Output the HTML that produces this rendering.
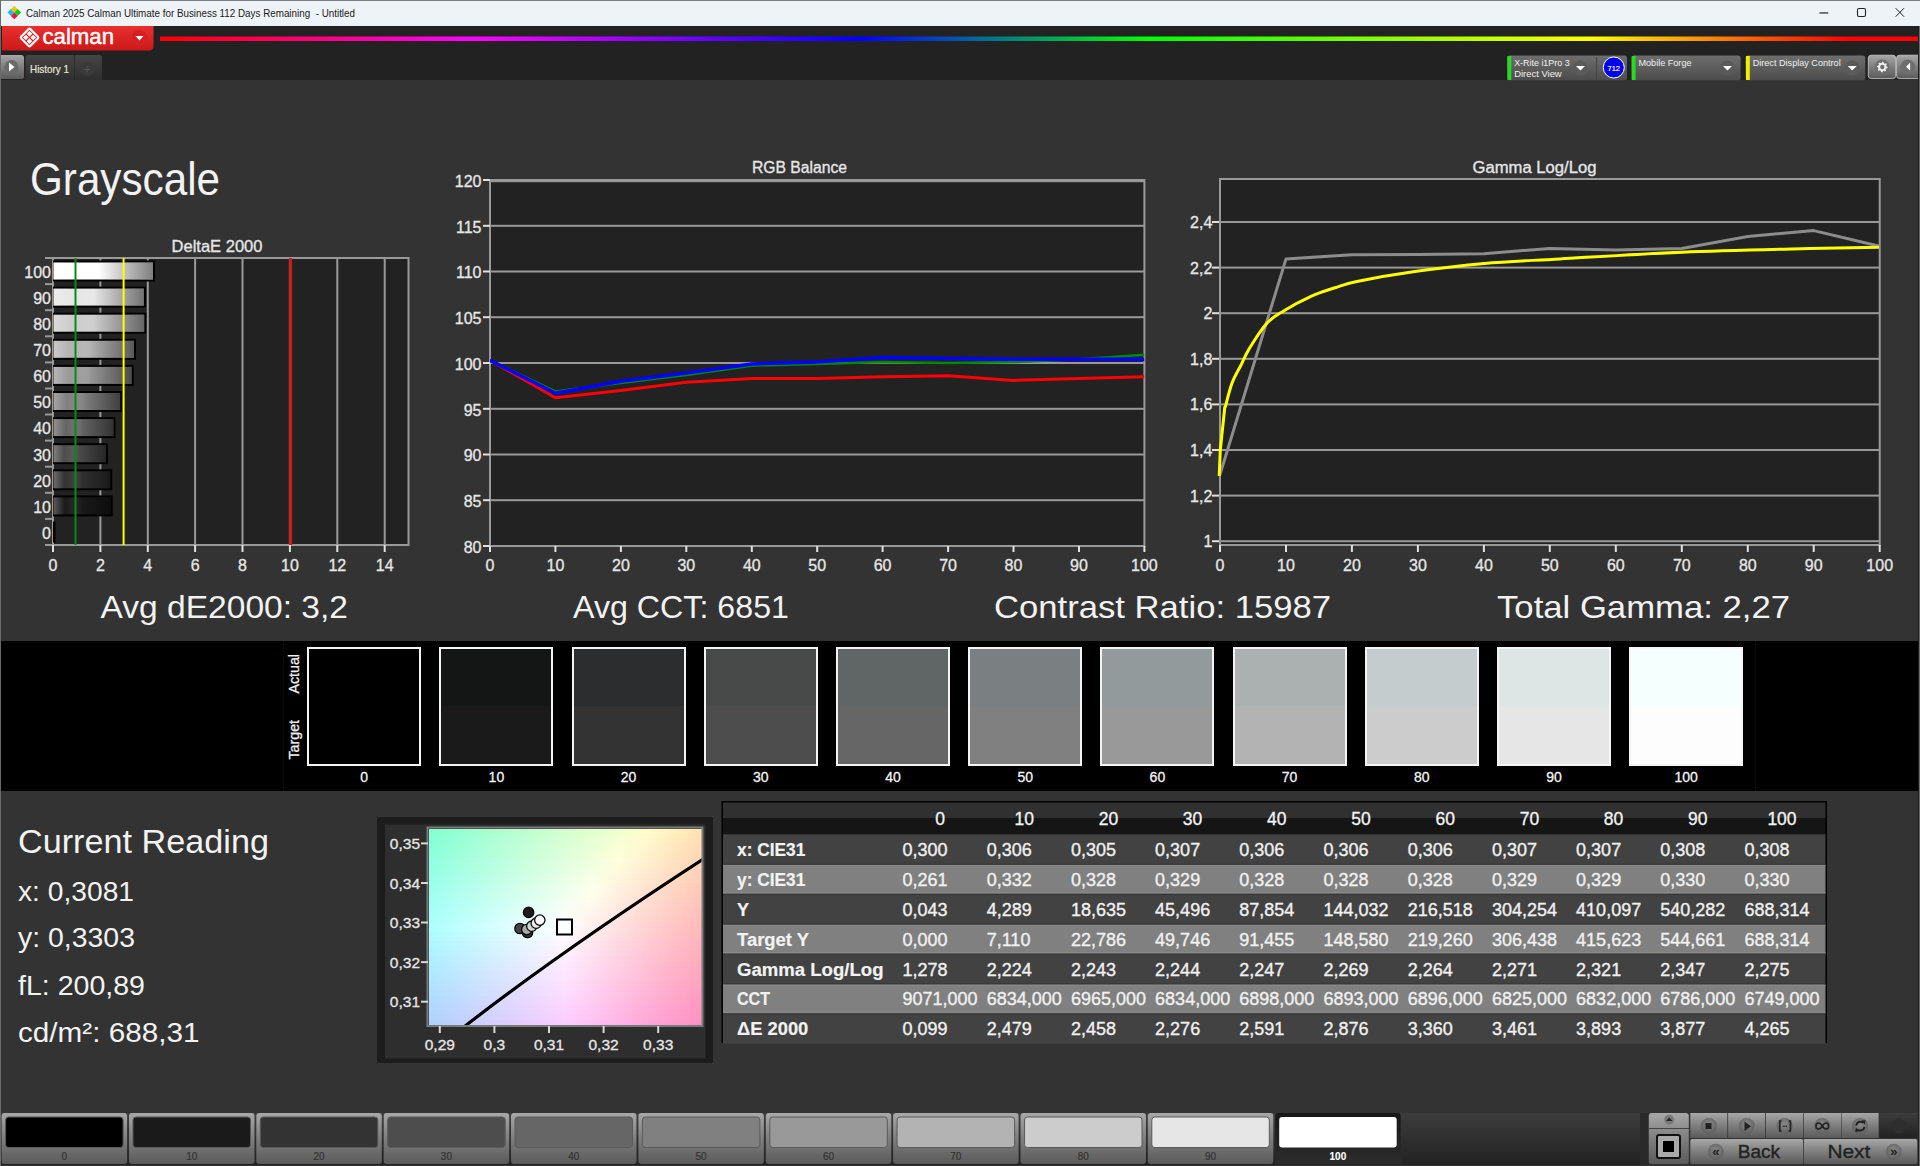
<!DOCTYPE html><html><head><meta charset="utf-8"><style>
html,body{margin:0;padding:0;background:#333;overflow:hidden;width:1920px;height:1166px}
svg{display:block}
text{font-family:"Liberation Sans", sans-serif}
</style></head><body>
<svg width="1920" height="1166" viewBox="0 0 1920 1166">
<defs>
<linearGradient id="rainbow" x1="160" y1="0" x2="1920" y2="0" gradientUnits="userSpaceOnUse">
<stop offset="0" stop-color="#ff0000"/>
<stop offset="0.1790" stop-color="#ff00ff"/>
<stop offset="0.3977" stop-color="#0000ff"/>
<stop offset="0.5625" stop-color="#00ff00"/>
<stop offset="0.8125" stop-color="#ffff00"/>
<stop offset="0.9602" stop-color="#ff0000"/>
<stop offset="1" stop-color="#ff0000"/>
</linearGradient>
<linearGradient id="redlogo" x1="0" y1="0" x2="0" y2="1">
<stop offset="0" stop-color="#e83030"/><stop offset="1" stop-color="#cc1818"/>
</linearGradient>
<linearGradient id="widget" x1="0" y1="0" x2="0" y2="1">
<stop offset="0" stop-color="#6e6e6e"/><stop offset="1" stop-color="#4c4c4c"/>
</linearGradient>
<linearGradient id="tabdark" x1="0" y1="0" x2="0" y2="1">
<stop offset="0" stop-color="#454545"/><stop offset="1" stop-color="#2e2e2e"/>
</linearGradient>
<linearGradient id="btngray" x1="0" y1="0" x2="0" y2="1">
<stop offset="0" stop-color="#a8a8a8"/><stop offset="0.35" stop-color="#8a8a8a"/><stop offset="1" stop-color="#5a5a5a"/>
</linearGradient>
<linearGradient id="btnsel" x1="0" y1="0" x2="0" y2="1">
<stop offset="0" stop-color="#181818"/><stop offset="1" stop-color="#2c2c2c"/>
</linearGradient>
<linearGradient id="barbg" x1="0" y1="0" x2="0" y2="1">
<stop offset="0" stop-color="#3c3c3c"/><stop offset="1" stop-color="#222"/>
</linearGradient>
<linearGradient id="thead" x1="0" y1="0" x2="0" y2="1">
<stop offset="0" stop-color="#2a2a2a"/><stop offset="0.45" stop-color="#2a2a2a"/><stop offset="0.46" stop-color="#1a1a1a"/><stop offset="1" stop-color="#161616"/>
</linearGradient>
<radialGradient id="circ" cx="0.5" cy="0.4" r="0.6">
<stop offset="0" stop-color="#8a8a8a"/><stop offset="1" stop-color="#5e5e5e"/>
</radialGradient>
</defs>

<rect x="0" y="0" width="1920" height="1166" fill="#333333"/>
<rect x="0" y="0" width="1920" height="26" fill="#eef3f7"/>
<rect x="0" y="0" width="1920" height="1" fill="#7a7d80"/>
<rect x="0" y="26" width="1920" height="54" fill="#222222"/>
<path d="M14.3 5.799999999999999 L17.7 9.2 L14.3 12.6 L10.9 9.2 Z" fill="#f5c400"/><path d="M10.9 9.1 L14.3 12.5 L10.9 15.9 L7.5 12.5 Z" fill="#22bbee"/><path d="M17.7 9.1 L21.099999999999998 12.5 L17.7 15.9 L14.299999999999999 12.5 Z" fill="#11cc11"/><path d="M14.3 12.5 L17.7 15.9 L14.3 19.3 L10.9 15.9 Z" fill="#ee1144"/>
<text x="26" y="17" font-size="11.5" fill="#1a1a1a" stroke="none" textLength="329" lengthAdjust="spacingAndGlyphs">Calman 2025 Calman Ultimate for Business 112 Days Remaining&#160; - Untitled</text>
<rect x="1819.5" y="12.3" width="8.7" height="1.3" fill="#333"/>
<rect x="1857.5" y="8.5" width="8" height="8" fill="none" stroke="#222" stroke-width="1.1" rx="1.5"/>
<path d="M1895.7 8.2 L1904 16.7 M1904 8.2 L1895.7 16.7" stroke="#222" stroke-width="1"/>
<path d="M2 26 H153.5 V46 Q153.5 50.5 149 50.5 H2 Z" fill="url(#redlogo)"/>
<g transform="translate(29.5,37.5) rotate(45)" fill="none" stroke="#fff" stroke-width="2.2"><rect x="-6.6" y="-6.6" width="13.2" height="13.2" rx="1.5"/></g>
<g transform="translate(29.5,37.5) rotate(45)" fill="#fff"><rect x="-4.6" y="-4.6" width="4" height="4"/><rect x="0.6" y="-4.6" width="4" height="4"/><rect x="-4.6" y="0.6" width="4" height="4"/><rect x="0.6" y="0.6" width="4" height="4"/></g>
<text transform="translate(42.5,43.75) scale(1,1.12)" x="0" y="0" font-size="19.5" fill="#fff" stroke="#fff" stroke-width="0.4" textLength="71.5" lengthAdjust="spacingAndGlyphs">calman</text>
<circle cx="139.6" cy="38" r="8" fill="#d42020"/>
<path d="M135.5 36 L143.5 36 L139.5 40.5 Z" fill="#fff"/>
<rect x="160" y="36.5" width="1760" height="4.5" fill="url(#rainbow)"/>
<path d="M1 55 H21 Q24 55 24 58 V77 Q24 79 21 79 H1 Z" fill="url(#btngray)"/>
<circle cx="11.5" cy="67" r="7" fill="#6a6a6a"/>
<path d="M9 62.5 L14.5 67 L9 71.5 Z" fill="#fff"/>
<path d="M25.5 80 V58 Q25.5 55 28.5 55 H99 Q102 55 102 58 V80 Z" fill="url(#tabdark)"/>
<rect x="74" y="55" width="1" height="25" fill="#2a2a2a"/>
<text stroke="#e8e2d4" stroke-width="0.22" x="30" y="72.5" font-size="11" fill="#e8e2d4" textLength="39" lengthAdjust="spacingAndGlyphs">History 1</text>
<circle cx="87" cy="69" r="7" fill="#3a3a3a"/>
<path d="M84 69.5 H90 M87 66.5 V72.5" stroke="#555" stroke-width="1"/>
<rect x="1507" y="55.5" width="120" height="24.7" rx="2.5" fill="url(#widget)"/><rect x="1507.5" y="56" width="3.8" height="24" fill="#22dd22"/><text x="1514.2" y="65.8" font-size="9.8" fill="#f0f0f0" textLength="55.4" lengthAdjust="spacingAndGlyphs">X-Rite i1Pro 3</text><text x="1514.2" y="77.3" font-size="9.8" fill="#f0f0f0" textLength="47.5" lengthAdjust="spacingAndGlyphs">Direct View</text><circle cx="1580.5" cy="68" r="7.5" fill="#5a5a5a"/><path d="M1576.0 66 H1585.0 L1580.5 70.5 Z" fill="#fff"/>
<rect x="1596" y="57" width="1" height="23" fill="#444"/>
<circle cx="1613.8" cy="67.5" r="10.5" fill="#0000ee" stroke="#fff" stroke-width="1"/>
<text stroke="#fff" stroke-width="0.15" x="1613.8" y="70.5" font-size="7.5" fill="#fff" text-anchor="middle">712</text>
<rect x="1631.3" y="55.5" width="109.29999999999995" height="24.7" rx="2.5" fill="url(#widget)"/><rect x="1631.8" y="56" width="3.8" height="24" fill="#22dd22"/><text x="1638.5" y="65.8" font-size="9.8" fill="#f0f0f0" textLength="53" lengthAdjust="spacingAndGlyphs">Mobile Forge</text><circle cx="1727.5" cy="68" r="7.5" fill="#5a5a5a"/><path d="M1723.0 66 H1732.0 L1727.5 70.5 Z" fill="#fff"/>
<rect x="1745.5" y="55.5" width="119.79999999999995" height="24.7" rx="2.5" fill="url(#widget)"/><rect x="1746.0" y="56" width="3.8" height="24" fill="#eeee00"/><text x="1752.7" y="65.8" font-size="9.8" fill="#f0f0f0" textLength="88" lengthAdjust="spacingAndGlyphs">Direct Display Control</text><circle cx="1852.2" cy="68" r="7.5" fill="#5a5a5a"/><path d="M1847.7 66 H1856.7 L1852.2 70.5 Z" fill="#fff"/>
<rect x="1868.3" y="55.2" width="27.4" height="23.4" rx="3" fill="url(#btngray)" stroke="#d0d0d0" stroke-width="0.8"/>
<circle cx="1882.2" cy="67" r="7.5" fill="#6e6e6e"/>
<polygon points="1882.30,61.60 1883.14,61.67 1883.75,62.53 1884.12,63.44 1884.65,63.76 1886.12,63.18 1886.67,63.83 1886.49,64.87 1886.10,65.76 1886.25,66.37 1887.70,67.00 1887.63,67.84 1886.77,68.45 1885.86,68.82 1885.54,69.35 1886.12,70.82 1885.47,71.37 1884.43,71.19 1883.54,70.80 1882.93,70.95 1882.30,72.40 1881.46,72.33 1880.85,71.47 1880.48,70.56 1879.95,70.24 1878.48,70.82 1877.93,70.17 1878.11,69.13 1878.50,68.24 1878.35,67.63 1876.90,67.00 1876.97,66.16 1877.83,65.55 1878.74,65.18 1879.06,64.65 1878.48,63.18 1879.13,62.63 1880.17,62.81 1881.06,63.20 1881.67,63.05" fill="#f0f0f0"/>
<circle cx="1882.3" cy="67" r="2.2" fill="#6e6e6e"/>
<rect x="1896.6" y="55.2" width="24" height="23.4" rx="3" fill="url(#btngray)" stroke="#d0d0d0" stroke-width="0.8"/>
<circle cx="1907.7" cy="67" r="7.5" fill="#6e6e6e"/>
<path d="M1910.1 62.8 L1906 66.8 L1910.1 70.4 Z" fill="#fff"/>
<text x="30" y="195" font-size="46" fill="#f2f2f2" textLength="190" lengthAdjust="spacingAndGlyphs">Grayscale</text>
<text stroke="#e6e6e6" stroke-width="0.32" x="171.5" y="252" font-size="16" fill="#e6e6e6" textLength="91" lengthAdjust="spacingAndGlyphs">DeltaE 2000</text>
<rect x="53" y="258" width="355.5" height="287" fill="#222222"/>
<rect x="99.4" y="258" width="2" height="287" fill="#999999"/>
<rect x="146.8" y="258" width="2" height="287" fill="#999999"/>
<rect x="194.1" y="258" width="2" height="287" fill="#999999"/>
<rect x="241.5" y="258" width="2" height="287" fill="#999999"/>
<rect x="288.9" y="258" width="2" height="287" fill="#999999"/>
<rect x="336.3" y="258" width="2" height="287" fill="#999999"/>
<rect x="383.7" y="258" width="2" height="287" fill="#999999"/>
<rect x="53" y="258" width="355.5" height="287" fill="none" stroke="#999999" stroke-width="2"/>
<linearGradient id="barhl" x1="0" y1="0" x2="1" y2="0"><stop offset="0" stop-color="#fff" stop-opacity="0.28"/><stop offset="0.2" stop-color="#fff" stop-opacity="0"/><stop offset="0.38" stop-color="#fff" stop-opacity="0.07"/><stop offset="0.5" stop-color="#fff" stop-opacity="0"/></linearGradient>
<linearGradient id="barsh" x1="0" y1="0" x2="1" y2="0"><stop offset="0" stop-color="#000" stop-opacity="0"/><stop offset="0.45" stop-color="#000" stop-opacity="0"/><stop offset="1" stop-color="#000" stop-opacity="0.5"/></linearGradient>
<rect x="53" y="495.4" width="59.7" height="21" fill="#000"/>
<rect x="53.5" y="497.4" width="57.2" height="17" fill="rgb(26,26,26)"/>
<rect x="53.5" y="497.4" width="57.2" height="17" fill="url(#barhl)"/>
<rect x="53.5" y="497.4" width="57.2" height="17" fill="url(#barsh)"/>
<rect x="53" y="469.3" width="59.2" height="21" fill="#000"/>
<rect x="53.5" y="471.3" width="56.7" height="17" fill="rgb(51,51,51)"/>
<rect x="53.5" y="471.3" width="56.7" height="17" fill="url(#barhl)"/>
<rect x="53.5" y="471.3" width="56.7" height="17" fill="url(#barsh)"/>
<rect x="53" y="443.2" width="54.9" height="21" fill="#000"/>
<rect x="53.5" y="445.2" width="52.4" height="17" fill="rgb(77,77,77)"/>
<rect x="53.5" y="445.2" width="52.4" height="17" fill="url(#barhl)"/>
<rect x="53.5" y="445.2" width="52.4" height="17" fill="url(#barsh)"/>
<rect x="53" y="417.1" width="62.4" height="21" fill="#000"/>
<rect x="53.5" y="419.1" width="59.9" height="17" fill="rgb(102,102,102)"/>
<rect x="53.5" y="419.1" width="59.9" height="17" fill="url(#barhl)"/>
<rect x="53.5" y="419.1" width="59.9" height="17" fill="url(#barsh)"/>
<rect x="53" y="391.0" width="69.1" height="21" fill="#000"/>
<rect x="53.5" y="393.0" width="66.6" height="17" fill="rgb(128,128,128)"/>
<rect x="53.5" y="393.0" width="66.6" height="17" fill="url(#barhl)"/>
<rect x="53.5" y="393.0" width="66.6" height="17" fill="url(#barsh)"/>
<rect x="53" y="364.9" width="80.6" height="21" fill="#000"/>
<rect x="53.5" y="366.9" width="78.1" height="17" fill="rgb(153,153,153)"/>
<rect x="53.5" y="366.9" width="78.1" height="17" fill="url(#barhl)"/>
<rect x="53.5" y="366.9" width="78.1" height="17" fill="url(#barsh)"/>
<rect x="53" y="338.8" width="83.0" height="21" fill="#000"/>
<rect x="53.5" y="340.8" width="80.5" height="17" fill="rgb(179,179,179)"/>
<rect x="53.5" y="340.8" width="80.5" height="17" fill="url(#barhl)"/>
<rect x="53.5" y="340.8" width="80.5" height="17" fill="url(#barsh)"/>
<rect x="53" y="312.7" width="93.2" height="21" fill="#000"/>
<rect x="53.5" y="314.7" width="90.7" height="17" fill="rgb(204,204,204)"/>
<rect x="53.5" y="314.7" width="90.7" height="17" fill="url(#barhl)"/>
<rect x="53.5" y="314.7" width="90.7" height="17" fill="url(#barsh)"/>
<rect x="53" y="286.6" width="92.8" height="21" fill="#000"/>
<rect x="53.5" y="288.6" width="90.3" height="17" fill="rgb(230,230,230)"/>
<rect x="53.5" y="288.6" width="90.3" height="17" fill="url(#barhl)"/>
<rect x="53.5" y="288.6" width="90.3" height="17" fill="url(#barsh)"/>
<rect x="53" y="260.5" width="102.0" height="21" fill="#000"/>
<rect x="53.5" y="262.5" width="99.5" height="17" fill="rgb(255,255,255)"/>
<rect x="53.5" y="262.5" width="99.5" height="17" fill="url(#barhl)"/>
<rect x="53.5" y="262.5" width="99.5" height="17" fill="url(#barsh)"/>
<rect x="53" y="521.5" width="2.5" height="21" fill="#000"/>
<rect x="74.5" y="258" width="2" height="287" fill="#0c8a0c"/>
<rect x="122.6" y="258" width="2" height="287" fill="#ffff00"/>
<rect x="289.1" y="258" width="3" height="287" fill="#d01818"/>
<text stroke="#e6e6e6" stroke-width="0.32" x="51" y="538.8" font-size="16" fill="#e6e6e6" text-anchor="end">0</text>
<text stroke="#e6e6e6" stroke-width="0.32" x="51" y="512.7" font-size="16" fill="#e6e6e6" text-anchor="end">10</text>
<text stroke="#e6e6e6" stroke-width="0.32" x="51" y="486.6" font-size="16" fill="#e6e6e6" text-anchor="end">20</text>
<text stroke="#e6e6e6" stroke-width="0.32" x="51" y="460.5" font-size="16" fill="#e6e6e6" text-anchor="end">30</text>
<text stroke="#e6e6e6" stroke-width="0.32" x="51" y="434.4" font-size="16" fill="#e6e6e6" text-anchor="end">40</text>
<text stroke="#e6e6e6" stroke-width="0.32" x="51" y="408.3" font-size="16" fill="#e6e6e6" text-anchor="end">50</text>
<text stroke="#e6e6e6" stroke-width="0.32" x="51" y="382.2" font-size="16" fill="#e6e6e6" text-anchor="end">60</text>
<text stroke="#e6e6e6" stroke-width="0.32" x="51" y="356.1" font-size="16" fill="#e6e6e6" text-anchor="end">70</text>
<text stroke="#e6e6e6" stroke-width="0.32" x="51" y="330.0" font-size="16" fill="#e6e6e6" text-anchor="end">80</text>
<text stroke="#e6e6e6" stroke-width="0.32" x="51" y="303.9" font-size="16" fill="#e6e6e6" text-anchor="end">90</text>
<text stroke="#e6e6e6" stroke-width="0.32" x="51" y="277.8" font-size="16" fill="#e6e6e6" text-anchor="end">100</text>
<rect x="45" y="544.0" width="8" height="2" fill="#999999"/>
<rect x="45" y="517.9" width="8" height="2" fill="#999999"/>
<rect x="45" y="491.8" width="8" height="2" fill="#999999"/>
<rect x="45" y="465.7" width="8" height="2" fill="#999999"/>
<rect x="45" y="439.6" width="8" height="2" fill="#999999"/>
<rect x="45" y="413.5" width="8" height="2" fill="#999999"/>
<rect x="45" y="387.5" width="8" height="2" fill="#999999"/>
<rect x="45" y="361.4" width="8" height="2" fill="#999999"/>
<rect x="45" y="335.3" width="8" height="2" fill="#999999"/>
<rect x="45" y="309.2" width="8" height="2" fill="#999999"/>
<rect x="45" y="283.1" width="8" height="2" fill="#999999"/>
<rect x="45" y="257.0" width="8" height="2" fill="#999999"/>
<rect x="52.0" y="545" width="2" height="7" fill="#e0e0e0"/>
<text stroke="#e6e6e6" stroke-width="0.32" x="53.0" y="570.5" font-size="16" fill="#e6e6e6" text-anchor="middle">0</text>
<rect x="99.4" y="545" width="2" height="7" fill="#e0e0e0"/>
<text stroke="#e6e6e6" stroke-width="0.32" x="100.4" y="570.5" font-size="16" fill="#e6e6e6" text-anchor="middle">2</text>
<rect x="146.8" y="545" width="2" height="7" fill="#e0e0e0"/>
<text stroke="#e6e6e6" stroke-width="0.32" x="147.8" y="570.5" font-size="16" fill="#e6e6e6" text-anchor="middle">4</text>
<rect x="194.1" y="545" width="2" height="7" fill="#e0e0e0"/>
<text stroke="#e6e6e6" stroke-width="0.32" x="195.1" y="570.5" font-size="16" fill="#e6e6e6" text-anchor="middle">6</text>
<rect x="241.5" y="545" width="2" height="7" fill="#e0e0e0"/>
<text stroke="#e6e6e6" stroke-width="0.32" x="242.5" y="570.5" font-size="16" fill="#e6e6e6" text-anchor="middle">8</text>
<rect x="288.9" y="545" width="2" height="7" fill="#e0e0e0"/>
<text stroke="#e6e6e6" stroke-width="0.32" x="289.9" y="570.5" font-size="16" fill="#e6e6e6" text-anchor="middle">10</text>
<rect x="336.3" y="545" width="2" height="7" fill="#e0e0e0"/>
<text stroke="#e6e6e6" stroke-width="0.32" x="337.3" y="570.5" font-size="16" fill="#e6e6e6" text-anchor="middle">12</text>
<rect x="383.7" y="545" width="2" height="7" fill="#e0e0e0"/>
<text stroke="#e6e6e6" stroke-width="0.32" x="384.7" y="570.5" font-size="16" fill="#e6e6e6" text-anchor="middle">14</text>
<text stroke="#e6e6e6" stroke-width="0.32" x="752" y="173" font-size="16" fill="#e6e6e6" textLength="95" lengthAdjust="spacingAndGlyphs">RGB Balance</text>
<rect x="490" y="180" width="654.4000000000001" height="366" fill="#222222"/>
<rect x="490" y="499.2" width="654.4000000000001" height="2" fill="#999999"/>
<rect x="490" y="453.5" width="654.4000000000001" height="2" fill="#999999"/>
<rect x="490" y="407.8" width="654.4000000000001" height="2" fill="#999999"/>
<rect x="490" y="362.0" width="654.4000000000001" height="2" fill="#999999"/>
<rect x="490" y="316.2" width="654.4000000000001" height="2" fill="#999999"/>
<rect x="490" y="270.5" width="654.4000000000001" height="2" fill="#999999"/>
<rect x="490" y="224.8" width="654.4000000000001" height="2" fill="#999999"/>
<rect x="490" y="180" width="654.4000000000001" height="2.2" fill="#999999"/>
<rect x="490" y="180" width="654.4000000000001" height="366" fill="none" stroke="#999999" stroke-width="2"/>
<rect x="483" y="545.0" width="7" height="2" fill="#e0e0e0"/>
<text stroke="#e6e6e6" stroke-width="0.32" x="481.5" y="552.8" font-size="16" fill="#e6e6e6" text-anchor="end">80</text>
<rect x="483" y="499.2" width="7" height="2" fill="#e0e0e0"/>
<text stroke="#e6e6e6" stroke-width="0.32" x="481.5" y="507.1" font-size="16" fill="#e6e6e6" text-anchor="end">85</text>
<rect x="483" y="453.5" width="7" height="2" fill="#e0e0e0"/>
<text stroke="#e6e6e6" stroke-width="0.32" x="481.5" y="461.3" font-size="16" fill="#e6e6e6" text-anchor="end">90</text>
<rect x="483" y="407.8" width="7" height="2" fill="#e0e0e0"/>
<text stroke="#e6e6e6" stroke-width="0.32" x="481.5" y="415.6" font-size="16" fill="#e6e6e6" text-anchor="end">95</text>
<rect x="483" y="362.0" width="7" height="2" fill="#e0e0e0"/>
<text stroke="#e6e6e6" stroke-width="0.32" x="481.5" y="369.8" font-size="16" fill="#e6e6e6" text-anchor="end">100</text>
<rect x="483" y="316.2" width="7" height="2" fill="#e0e0e0"/>
<text stroke="#e6e6e6" stroke-width="0.32" x="481.5" y="324.1" font-size="16" fill="#e6e6e6" text-anchor="end">105</text>
<rect x="483" y="270.5" width="7" height="2" fill="#e0e0e0"/>
<text stroke="#e6e6e6" stroke-width="0.32" x="481.5" y="278.3" font-size="16" fill="#e6e6e6" text-anchor="end">110</text>
<rect x="483" y="224.8" width="7" height="2" fill="#e0e0e0"/>
<text stroke="#e6e6e6" stroke-width="0.32" x="481.5" y="232.6" font-size="16" fill="#e6e6e6" text-anchor="end">115</text>
<rect x="483" y="179.0" width="7" height="2" fill="#e0e0e0"/>
<text stroke="#e6e6e6" stroke-width="0.32" x="481.5" y="186.8" font-size="16" fill="#e6e6e6" text-anchor="end">120</text>
<rect x="489.0" y="546" width="2" height="6" fill="#e0e0e0"/>
<text stroke="#e6e6e6" stroke-width="0.32" x="490.0" y="570.5" font-size="16" fill="#e6e6e6" text-anchor="middle">0</text>
<rect x="554.4" y="546" width="2" height="6" fill="#e0e0e0"/>
<text stroke="#e6e6e6" stroke-width="0.32" x="555.4" y="570.5" font-size="16" fill="#e6e6e6" text-anchor="middle">10</text>
<rect x="619.9" y="546" width="2" height="6" fill="#e0e0e0"/>
<text stroke="#e6e6e6" stroke-width="0.32" x="620.9" y="570.5" font-size="16" fill="#e6e6e6" text-anchor="middle">20</text>
<rect x="685.3" y="546" width="2" height="6" fill="#e0e0e0"/>
<text stroke="#e6e6e6" stroke-width="0.32" x="686.3" y="570.5" font-size="16" fill="#e6e6e6" text-anchor="middle">30</text>
<rect x="750.8" y="546" width="2" height="6" fill="#e0e0e0"/>
<text stroke="#e6e6e6" stroke-width="0.32" x="751.8" y="570.5" font-size="16" fill="#e6e6e6" text-anchor="middle">40</text>
<rect x="816.2" y="546" width="2" height="6" fill="#e0e0e0"/>
<text stroke="#e6e6e6" stroke-width="0.32" x="817.2" y="570.5" font-size="16" fill="#e6e6e6" text-anchor="middle">50</text>
<rect x="881.6" y="546" width="2" height="6" fill="#e0e0e0"/>
<text stroke="#e6e6e6" stroke-width="0.32" x="882.6" y="570.5" font-size="16" fill="#e6e6e6" text-anchor="middle">60</text>
<rect x="947.1" y="546" width="2" height="6" fill="#e0e0e0"/>
<text stroke="#e6e6e6" stroke-width="0.32" x="948.1" y="570.5" font-size="16" fill="#e6e6e6" text-anchor="middle">70</text>
<rect x="1012.5" y="546" width="2" height="6" fill="#e0e0e0"/>
<text stroke="#e6e6e6" stroke-width="0.32" x="1013.5" y="570.5" font-size="16" fill="#e6e6e6" text-anchor="middle">80</text>
<rect x="1078.0" y="546" width="2" height="6" fill="#e0e0e0"/>
<text stroke="#e6e6e6" stroke-width="0.32" x="1079.0" y="570.5" font-size="16" fill="#e6e6e6" text-anchor="middle">90</text>
<rect x="1143.4" y="546" width="2" height="6" fill="#e0e0e0"/>
<text stroke="#e6e6e6" stroke-width="0.32" x="1144.4" y="570.5" font-size="16" fill="#e6e6e6" text-anchor="middle">100</text>
<svg x="490" y="180" width="654.4000000000001" height="366" viewBox="490 180 654.4000000000001 366" overflow="hidden">
<polyline points="490.0,360.3 555.4,397.8 620.9,390.4 686.3,382.2 751.8,378.6 817.2,378.6 882.6,376.7 948.1,375.8 1013.5,380.4 1079.0,378.6 1144.4,376.7" fill="none" stroke="#ff0000" stroke-width="3" stroke-linejoin="round"/>
<polyline points="490.0,360.3 555.4,391.4 620.9,383.1 686.3,374.9 751.8,365.7 817.2,363.9 882.6,362.1 948.1,363.0 1013.5,362.1 1079.0,359.3 1144.4,354.8" fill="none" stroke="#008800" stroke-width="2.5" stroke-linejoin="round"/>
<polyline points="490.0,360.3 555.4,393.2 620.9,381.3 686.3,373.1 751.8,363.9 817.2,362.1 882.6,357.5 948.1,358.4 1013.5,359.3 1079.0,359.3 1144.4,359.3" fill="none" stroke="#0000ff" stroke-width="3.5" stroke-linejoin="round"/>
</svg>
<text stroke="#e6e6e6" stroke-width="0.32" x="1472.5" y="173" font-size="16" fill="#e6e6e6" textLength="124" lengthAdjust="spacingAndGlyphs">Gamma Log/Log</text>
<rect x="1220" y="179" width="659.7" height="366" fill="#222222"/>
<rect x="1220" y="540.2" width="659.7" height="2" fill="#999999"/>
<rect x="1212" y="540.2" width="8" height="2" fill="#e0e0e0"/>
<text stroke="#e6e6e6" stroke-width="0.32" x="1212.3" y="547.1" font-size="16" fill="#e6e6e6" text-anchor="end">1</text>
<rect x="1220" y="494.6" width="659.7" height="2" fill="#999999"/>
<rect x="1212" y="494.6" width="8" height="2" fill="#e0e0e0"/>
<text stroke="#e6e6e6" stroke-width="0.32" x="1212.3" y="501.5" font-size="16" fill="#e6e6e6" text-anchor="end">1,2</text>
<rect x="1220" y="449.0" width="659.7" height="2" fill="#999999"/>
<rect x="1212" y="449.0" width="8" height="2" fill="#e0e0e0"/>
<text stroke="#e6e6e6" stroke-width="0.32" x="1212.3" y="455.9" font-size="16" fill="#e6e6e6" text-anchor="end">1,4</text>
<rect x="1220" y="403.4" width="659.7" height="2" fill="#999999"/>
<rect x="1212" y="403.4" width="8" height="2" fill="#e0e0e0"/>
<text stroke="#e6e6e6" stroke-width="0.32" x="1212.3" y="410.3" font-size="16" fill="#e6e6e6" text-anchor="end">1,6</text>
<rect x="1220" y="357.8" width="659.7" height="2" fill="#999999"/>
<rect x="1212" y="357.8" width="8" height="2" fill="#e0e0e0"/>
<text stroke="#e6e6e6" stroke-width="0.32" x="1212.3" y="364.7" font-size="16" fill="#e6e6e6" text-anchor="end">1,8</text>
<rect x="1220" y="312.2" width="659.7" height="2" fill="#999999"/>
<rect x="1212" y="312.2" width="8" height="2" fill="#e0e0e0"/>
<text stroke="#e6e6e6" stroke-width="0.32" x="1212.3" y="319.1" font-size="16" fill="#e6e6e6" text-anchor="end">2</text>
<rect x="1220" y="266.6" width="659.7" height="2" fill="#999999"/>
<rect x="1212" y="266.6" width="8" height="2" fill="#e0e0e0"/>
<text stroke="#e6e6e6" stroke-width="0.32" x="1212.3" y="273.5" font-size="16" fill="#e6e6e6" text-anchor="end">2,2</text>
<rect x="1220" y="221.0" width="659.7" height="2" fill="#999999"/>
<rect x="1212" y="221.0" width="8" height="2" fill="#e0e0e0"/>
<text stroke="#e6e6e6" stroke-width="0.32" x="1212.3" y="227.9" font-size="16" fill="#e6e6e6" text-anchor="end">2,4</text>
<rect x="1220" y="179" width="659.7" height="366" fill="none" stroke="#999999" stroke-width="2"/>
<rect x="1219.0" y="545" width="2" height="7" fill="#e0e0e0"/>
<text stroke="#e6e6e6" stroke-width="0.32" x="1220.0" y="570.5" font-size="16" fill="#e6e6e6" text-anchor="middle">0</text>
<rect x="1285.0" y="545" width="2" height="7" fill="#e0e0e0"/>
<text stroke="#e6e6e6" stroke-width="0.32" x="1286.0" y="570.5" font-size="16" fill="#e6e6e6" text-anchor="middle">10</text>
<rect x="1350.9" y="545" width="2" height="7" fill="#e0e0e0"/>
<text stroke="#e6e6e6" stroke-width="0.32" x="1351.9" y="570.5" font-size="16" fill="#e6e6e6" text-anchor="middle">20</text>
<rect x="1416.9" y="545" width="2" height="7" fill="#e0e0e0"/>
<text stroke="#e6e6e6" stroke-width="0.32" x="1417.9" y="570.5" font-size="16" fill="#e6e6e6" text-anchor="middle">30</text>
<rect x="1482.9" y="545" width="2" height="7" fill="#e0e0e0"/>
<text stroke="#e6e6e6" stroke-width="0.32" x="1483.9" y="570.5" font-size="16" fill="#e6e6e6" text-anchor="middle">40</text>
<rect x="1548.8" y="545" width="2" height="7" fill="#e0e0e0"/>
<text stroke="#e6e6e6" stroke-width="0.32" x="1549.8" y="570.5" font-size="16" fill="#e6e6e6" text-anchor="middle">50</text>
<rect x="1614.8" y="545" width="2" height="7" fill="#e0e0e0"/>
<text stroke="#e6e6e6" stroke-width="0.32" x="1615.8" y="570.5" font-size="16" fill="#e6e6e6" text-anchor="middle">60</text>
<rect x="1680.8" y="545" width="2" height="7" fill="#e0e0e0"/>
<text stroke="#e6e6e6" stroke-width="0.32" x="1681.8" y="570.5" font-size="16" fill="#e6e6e6" text-anchor="middle">70</text>
<rect x="1746.8" y="545" width="2" height="7" fill="#e0e0e0"/>
<text stroke="#e6e6e6" stroke-width="0.32" x="1747.8" y="570.5" font-size="16" fill="#e6e6e6" text-anchor="middle">80</text>
<rect x="1812.7" y="545" width="2" height="7" fill="#e0e0e0"/>
<text stroke="#e6e6e6" stroke-width="0.32" x="1813.7" y="570.5" font-size="16" fill="#e6e6e6" text-anchor="middle">90</text>
<rect x="1878.7" y="545" width="2" height="7" fill="#e0e0e0"/>
<text stroke="#e6e6e6" stroke-width="0.32" x="1879.7" y="570.5" font-size="16" fill="#e6e6e6" text-anchor="middle">100</text>
<polyline points="1220.0,474.5 1286.0,258.9 1351.9,254.7 1417.9,254.6 1483.9,253.8 1549.8,248.4 1615.8,250.0 1681.8,248.4 1747.8,236.4 1813.7,230.6 1879.7,246.3" fill="none" stroke="#8c8c8c" stroke-width="3" stroke-linejoin="round"/>
<path d="M1219.2 476 L1220.3 450 L1224.8 407 L1225.3 406.9 C1226.4 402.9 1229.5 389.8 1232.1 382.9 C1234.7 376.0 1237.8 371.4 1240.7 365.7 C1243.6 360.0 1245.0 355.6 1249.3 348.6 C1253.6 341.6 1260.7 330.0 1266.4 323.7 C1272.1 317.4 1276.2 315.5 1283.6 310.9 C1291.0 306.3 1302.4 300.2 1311.0 296.3 C1319.6 292.4 1327.3 290.2 1335.0 287.7 C1342.7 285.2 1343.6 284.2 1356.9 281.5 C1370.2 278.8 1393.6 274.6 1414.8 271.6 C1436.0 268.6 1460.1 265.6 1484.3 263.5 C1508.5 261.4 1527.0 260.8 1560.0 258.9 C1593.0 257.0 1640.5 253.9 1682.1 252.2 C1723.7 250.5 1776.7 249.4 1809.5 248.6 C1842.3 247.8 1867.4 247.5 1879.0 247.3" fill="none" stroke="#ffff00" stroke-width="3" stroke-linejoin="round"/>
<text x="100.5" y="617.5" font-size="32" fill="#f2f2f2" textLength="247.5" lengthAdjust="spacingAndGlyphs">Avg dE2000: 3,2</text>
<text x="573" y="617.5" font-size="32" fill="#f2f2f2" textLength="216" lengthAdjust="spacingAndGlyphs">Avg CCT: 6851</text>
<text x="994" y="617.5" font-size="32" fill="#f2f2f2" textLength="337" lengthAdjust="spacingAndGlyphs">Contrast Ratio: 15987</text>
<text x="1497" y="617.5" font-size="32" fill="#f2f2f2" textLength="293" lengthAdjust="spacingAndGlyphs">Total Gamma: 2,27</text>
<rect x="1" y="641" width="1917" height="150" fill="#000"/>
<rect x="283" y="641" width="1" height="150" fill="#0a0a0a"/>
<rect x="1755" y="641" width="1" height="150" fill="#0a0a0a"/>
<rect x="307" y="647" width="114" height="119" fill="#f4f4f4"/>
<rect x="309" y="649" width="110" height="57" fill="#000000"/>
<rect x="309" y="706" width="110" height="58" fill="#000000"/>
<text stroke="#f4f4f4" stroke-width="0.28" x="364.2" y="781.5" font-size="14" fill="#f4f4f4" text-anchor="middle">0</text>
<rect x="439" y="647" width="114" height="119" fill="#f4f4f4"/>
<rect x="441" y="649" width="110" height="57" fill="#141615"/>
<rect x="441" y="706" width="110" height="58" fill="#1a1a1a"/>
<text stroke="#f4f4f4" stroke-width="0.28" x="496.4" y="781.5" font-size="14" fill="#f4f4f4" text-anchor="middle">10</text>
<rect x="572" y="647" width="114" height="119" fill="#f4f4f4"/>
<rect x="574" y="649" width="110" height="57" fill="#2b2d2e"/>
<rect x="574" y="706" width="110" height="58" fill="#333333"/>
<text stroke="#f4f4f4" stroke-width="0.28" x="628.6" y="781.5" font-size="14" fill="#f4f4f4" text-anchor="middle">20</text>
<rect x="704" y="647" width="114" height="119" fill="#f4f4f4"/>
<rect x="706" y="649" width="110" height="57" fill="#484a4a"/>
<rect x="706" y="706" width="110" height="58" fill="#4d4d4d"/>
<text stroke="#f4f4f4" stroke-width="0.28" x="760.8" y="781.5" font-size="14" fill="#f4f4f4" text-anchor="middle">30</text>
<rect x="836" y="647" width="114" height="119" fill="#f4f4f4"/>
<rect x="838" y="649" width="110" height="57" fill="#606665"/>
<rect x="838" y="706" width="110" height="58" fill="#666666"/>
<text stroke="#f4f4f4" stroke-width="0.28" x="893.0" y="781.5" font-size="14" fill="#f4f4f4" text-anchor="middle">40</text>
<rect x="968" y="647" width="114" height="119" fill="#f4f4f4"/>
<rect x="970" y="649" width="110" height="57" fill="#7a8082"/>
<rect x="970" y="706" width="110" height="58" fill="#808080"/>
<text stroke="#f4f4f4" stroke-width="0.28" x="1025.2" y="781.5" font-size="14" fill="#f4f4f4" text-anchor="middle">50</text>
<rect x="1100" y="647" width="114" height="119" fill="#f4f4f4"/>
<rect x="1102" y="649" width="110" height="57" fill="#939a9c"/>
<rect x="1102" y="706" width="110" height="58" fill="#999999"/>
<text stroke="#f4f4f4" stroke-width="0.28" x="1157.4" y="781.5" font-size="14" fill="#f4f4f4" text-anchor="middle">60</text>
<rect x="1233" y="647" width="114" height="119" fill="#f4f4f4"/>
<rect x="1235" y="649" width="110" height="57" fill="#abb1b0"/>
<rect x="1235" y="706" width="110" height="58" fill="#b3b3b3"/>
<text stroke="#f4f4f4" stroke-width="0.28" x="1289.6" y="781.5" font-size="14" fill="#f4f4f4" text-anchor="middle">70</text>
<rect x="1365" y="647" width="114" height="119" fill="#f4f4f4"/>
<rect x="1367" y="649" width="110" height="57" fill="#c4cccd"/>
<rect x="1367" y="706" width="110" height="58" fill="#cccccc"/>
<text stroke="#f4f4f4" stroke-width="0.28" x="1421.8" y="781.5" font-size="14" fill="#f4f4f4" text-anchor="middle">80</text>
<rect x="1497" y="647" width="114" height="119" fill="#f4f4f4"/>
<rect x="1499" y="649" width="110" height="57" fill="#dde6e5"/>
<rect x="1499" y="706" width="110" height="58" fill="#e6e6e6"/>
<text stroke="#f4f4f4" stroke-width="0.28" x="1554.0" y="781.5" font-size="14" fill="#f4f4f4" text-anchor="middle">90</text>
<rect x="1629" y="647" width="114" height="119" fill="#f4f4f4"/>
<rect x="1631" y="649" width="110" height="57" fill="#f5fffe"/>
<rect x="1631" y="706" width="110" height="58" fill="#fdfdfd"/>
<text stroke="#f4f4f4" stroke-width="0.28" x="1686.2" y="781.5" font-size="14" fill="#f4f4f4" text-anchor="middle">100</text>
<text stroke="#f0f0f0" stroke-width="0.28" transform="translate(299,693.5) rotate(-90)" font-size="14" fill="#f0f0f0" textLength="39.5" lengthAdjust="spacingAndGlyphs">Actual</text>
<text stroke="#f0f0f0" stroke-width="0.28" transform="translate(299,759.5) rotate(-90)" font-size="14" fill="#f0f0f0" textLength="39.5" lengthAdjust="spacingAndGlyphs">Target</text>
<text x="18" y="852.5" font-size="33" fill="#f2f2f2" textLength="251" lengthAdjust="spacingAndGlyphs">Current Reading</text>
<text x="18" y="900.5" font-size="27" fill="#f2f2f2" textLength="116" lengthAdjust="spacingAndGlyphs">x: 0,3081</text>
<text x="18" y="947" font-size="27" fill="#f2f2f2" textLength="117" lengthAdjust="spacingAndGlyphs">y: 0,3303</text>
<text x="18" y="995" font-size="27" fill="#f2f2f2" textLength="127" lengthAdjust="spacingAndGlyphs">fL: 200,89</text>
<text x="18" y="1041.5" font-size="27" fill="#f2f2f2" textLength="181.5" lengthAdjust="spacingAndGlyphs">cd/m²: 688,31</text>
<rect x="377" y="817" width="336" height="246" fill="#1c1c1c"/>
<rect x="385" y="824.5" width="320.5" height="234" fill="#2e2e2e"/>
<linearGradient id="cie0" x1="0" y1="0" x2="1" y2="0"><stop offset="0.0" stop-color="#82ffd2"/><stop offset="0.1" stop-color="#93ffd2"/><stop offset="0.2" stop-color="#a4ffd1"/><stop offset="0.3" stop-color="#b4ffd0"/><stop offset="0.4" stop-color="#c4ffd0"/><stop offset="0.5" stop-color="#d4ffcf"/><stop offset="0.6" stop-color="#e3ffcf"/><stop offset="0.7" stop-color="#f2ffce"/><stop offset="0.8" stop-color="#fffdcb"/><stop offset="0.9" stop-color="#ffefbe"/><stop offset="1.0" stop-color="#ffe1b1"/></linearGradient>
<rect x="428.5" y="828.50" width="273.0" height="5.91" fill="url(#cie0)" shape-rendering="crispEdges"/>
<linearGradient id="cie1" x1="0" y1="0" x2="1" y2="0"><stop offset="0.0" stop-color="#84ffd4"/><stop offset="0.1" stop-color="#95ffd4"/><stop offset="0.2" stop-color="#a6ffd3"/><stop offset="0.3" stop-color="#b6ffd3"/><stop offset="0.4" stop-color="#c6ffd2"/><stop offset="0.5" stop-color="#d6ffd2"/><stop offset="0.6" stop-color="#e5ffd1"/><stop offset="0.7" stop-color="#f4ffd0"/><stop offset="0.8" stop-color="#fffbcc"/><stop offset="0.9" stop-color="#ffedbe"/><stop offset="1.0" stop-color="#ffdfb1"/></linearGradient>
<rect x="428.5" y="833.41" width="273.0" height="5.91" fill="url(#cie1)" shape-rendering="crispEdges"/>
<linearGradient id="cie2" x1="0" y1="0" x2="1" y2="0"><stop offset="0.0" stop-color="#86ffd7"/><stop offset="0.1" stop-color="#97ffd6"/><stop offset="0.2" stop-color="#a8ffd6"/><stop offset="0.3" stop-color="#b8ffd5"/><stop offset="0.4" stop-color="#c8ffd4"/><stop offset="0.5" stop-color="#d8ffd4"/><stop offset="0.6" stop-color="#e7ffd3"/><stop offset="0.7" stop-color="#f6ffd3"/><stop offset="0.8" stop-color="#fff9cc"/><stop offset="0.9" stop-color="#ffebbf"/><stop offset="1.0" stop-color="#ffddb2"/></linearGradient>
<rect x="428.5" y="838.33" width="273.0" height="5.91" fill="url(#cie2)" shape-rendering="crispEdges"/>
<linearGradient id="cie3" x1="0" y1="0" x2="1" y2="0"><stop offset="0.0" stop-color="#88ffd9"/><stop offset="0.1" stop-color="#99ffd8"/><stop offset="0.2" stop-color="#aaffd8"/><stop offset="0.3" stop-color="#baffd7"/><stop offset="0.4" stop-color="#caffd7"/><stop offset="0.5" stop-color="#daffd6"/><stop offset="0.6" stop-color="#e9ffd6"/><stop offset="0.7" stop-color="#f9ffd5"/><stop offset="0.8" stop-color="#fff7cd"/><stop offset="0.9" stop-color="#ffe8bf"/><stop offset="1.0" stop-color="#ffdbb2"/></linearGradient>
<rect x="428.5" y="843.24" width="273.0" height="5.91" fill="url(#cie3)" shape-rendering="crispEdges"/>
<linearGradient id="cie4" x1="0" y1="0" x2="1" y2="0"><stop offset="0.0" stop-color="#8affdb"/><stop offset="0.1" stop-color="#9bffdb"/><stop offset="0.2" stop-color="#acffda"/><stop offset="0.3" stop-color="#bcffda"/><stop offset="0.4" stop-color="#ccffd9"/><stop offset="0.5" stop-color="#dcffd9"/><stop offset="0.6" stop-color="#ecffd8"/><stop offset="0.7" stop-color="#fbffd7"/><stop offset="0.8" stop-color="#fff4cd"/><stop offset="0.9" stop-color="#ffe6c0"/><stop offset="1.0" stop-color="#ffd9b3"/></linearGradient>
<rect x="428.5" y="848.15" width="273.0" height="5.91" fill="url(#cie4)" shape-rendering="crispEdges"/>
<linearGradient id="cie5" x1="0" y1="0" x2="1" y2="0"><stop offset="0.0" stop-color="#8cffdd"/><stop offset="0.1" stop-color="#9effdd"/><stop offset="0.2" stop-color="#aeffdc"/><stop offset="0.3" stop-color="#bfffdc"/><stop offset="0.4" stop-color="#cfffdb"/><stop offset="0.5" stop-color="#deffdb"/><stop offset="0.6" stop-color="#eeffda"/><stop offset="0.7" stop-color="#fdffda"/><stop offset="0.8" stop-color="#fff2cd"/><stop offset="0.9" stop-color="#ffe4c0"/><stop offset="1.0" stop-color="#ffd7b3"/></linearGradient>
<rect x="428.5" y="853.06" width="273.0" height="5.91" fill="url(#cie5)" shape-rendering="crispEdges"/>
<linearGradient id="cie6" x1="0" y1="0" x2="1" y2="0"><stop offset="0.0" stop-color="#8effe0"/><stop offset="0.1" stop-color="#a0ffdf"/><stop offset="0.2" stop-color="#b0ffdf"/><stop offset="0.3" stop-color="#c1ffde"/><stop offset="0.4" stop-color="#d1ffde"/><stop offset="0.5" stop-color="#e1ffdd"/><stop offset="0.6" stop-color="#f0ffdd"/><stop offset="0.7" stop-color="#ffffdc"/><stop offset="0.8" stop-color="#fff0ce"/><stop offset="0.9" stop-color="#ffe2c0"/><stop offset="1.0" stop-color="#ffd5b4"/></linearGradient>
<rect x="428.5" y="857.98" width="273.0" height="5.91" fill="url(#cie6)" shape-rendering="crispEdges"/>
<linearGradient id="cie7" x1="0" y1="0" x2="1" y2="0"><stop offset="0.0" stop-color="#91ffe2"/><stop offset="0.1" stop-color="#a2ffe1"/><stop offset="0.2" stop-color="#b3ffe1"/><stop offset="0.3" stop-color="#c3ffe1"/><stop offset="0.4" stop-color="#d3ffe0"/><stop offset="0.5" stop-color="#e3ffe0"/><stop offset="0.6" stop-color="#f2ffdf"/><stop offset="0.7" stop-color="#fffcdc"/><stop offset="0.8" stop-color="#ffeece"/><stop offset="0.9" stop-color="#ffe0c1"/><stop offset="1.0" stop-color="#ffd3b4"/></linearGradient>
<rect x="428.5" y="862.89" width="273.0" height="5.91" fill="url(#cie7)" shape-rendering="crispEdges"/>
<linearGradient id="cie8" x1="0" y1="0" x2="1" y2="0"><stop offset="0.0" stop-color="#93ffe4"/><stop offset="0.1" stop-color="#a4ffe4"/><stop offset="0.2" stop-color="#b5ffe3"/><stop offset="0.3" stop-color="#c5ffe3"/><stop offset="0.4" stop-color="#d5ffe3"/><stop offset="0.5" stop-color="#e5ffe2"/><stop offset="0.6" stop-color="#f5ffe2"/><stop offset="0.7" stop-color="#fffadd"/><stop offset="0.8" stop-color="#ffebcf"/><stop offset="0.9" stop-color="#ffdec1"/><stop offset="1.0" stop-color="#ffd1b5"/></linearGradient>
<rect x="428.5" y="867.80" width="273.0" height="5.91" fill="url(#cie8)" shape-rendering="crispEdges"/>
<linearGradient id="cie9" x1="0" y1="0" x2="1" y2="0"><stop offset="0.0" stop-color="#95ffe6"/><stop offset="0.1" stop-color="#a6ffe6"/><stop offset="0.2" stop-color="#b7ffe6"/><stop offset="0.3" stop-color="#c7ffe5"/><stop offset="0.4" stop-color="#d7ffe5"/><stop offset="0.5" stop-color="#e7ffe5"/><stop offset="0.6" stop-color="#f7ffe4"/><stop offset="0.7" stop-color="#fff8dd"/><stop offset="0.8" stop-color="#ffe9cf"/><stop offset="0.9" stop-color="#ffdcc2"/><stop offset="1.0" stop-color="#ffcfb5"/></linearGradient>
<rect x="428.5" y="872.71" width="273.0" height="5.91" fill="url(#cie9)" shape-rendering="crispEdges"/>
<linearGradient id="cie10" x1="0" y1="0" x2="1" y2="0"><stop offset="0.0" stop-color="#97ffe9"/><stop offset="0.1" stop-color="#a8ffe8"/><stop offset="0.2" stop-color="#b9ffe8"/><stop offset="0.3" stop-color="#c9ffe8"/><stop offset="0.4" stop-color="#daffe7"/><stop offset="0.5" stop-color="#eaffe7"/><stop offset="0.6" stop-color="#f9ffe7"/><stop offset="0.7" stop-color="#fff6dd"/><stop offset="0.8" stop-color="#ffe7cf"/><stop offset="0.9" stop-color="#ffdac2"/><stop offset="1.0" stop-color="#ffcdb6"/></linearGradient>
<rect x="428.5" y="877.62" width="273.0" height="5.91" fill="url(#cie10)" shape-rendering="crispEdges"/>
<linearGradient id="cie11" x1="0" y1="0" x2="1" y2="0"><stop offset="0.0" stop-color="#99ffeb"/><stop offset="0.1" stop-color="#aaffeb"/><stop offset="0.2" stop-color="#bbffea"/><stop offset="0.3" stop-color="#ccffea"/><stop offset="0.4" stop-color="#dcffea"/><stop offset="0.5" stop-color="#ecffea"/><stop offset="0.6" stop-color="#fcffe9"/><stop offset="0.7" stop-color="#fff3de"/><stop offset="0.8" stop-color="#ffe5d0"/><stop offset="0.9" stop-color="#ffd7c2"/><stop offset="1.0" stop-color="#ffcbb6"/></linearGradient>
<rect x="428.5" y="882.54" width="273.0" height="5.91" fill="url(#cie11)" shape-rendering="crispEdges"/>
<linearGradient id="cie12" x1="0" y1="0" x2="1" y2="0"><stop offset="0.0" stop-color="#9bffed"/><stop offset="0.1" stop-color="#adffed"/><stop offset="0.2" stop-color="#bdffed"/><stop offset="0.3" stop-color="#ceffec"/><stop offset="0.4" stop-color="#deffec"/><stop offset="0.5" stop-color="#eeffec"/><stop offset="0.6" stop-color="#feffec"/><stop offset="0.7" stop-color="#fff1de"/><stop offset="0.8" stop-color="#ffe3d0"/><stop offset="0.9" stop-color="#ffd5c3"/><stop offset="1.0" stop-color="#ffc9b6"/></linearGradient>
<rect x="428.5" y="887.45" width="273.0" height="5.91" fill="url(#cie12)" shape-rendering="crispEdges"/>
<linearGradient id="cie13" x1="0" y1="0" x2="1" y2="0"><stop offset="0.0" stop-color="#9dfff0"/><stop offset="0.1" stop-color="#afffef"/><stop offset="0.2" stop-color="#c0ffef"/><stop offset="0.3" stop-color="#d0ffef"/><stop offset="0.4" stop-color="#e0ffef"/><stop offset="0.5" stop-color="#f0ffee"/><stop offset="0.6" stop-color="#fffeed"/><stop offset="0.7" stop-color="#ffefde"/><stop offset="0.8" stop-color="#ffe1d0"/><stop offset="0.9" stop-color="#ffd3c3"/><stop offset="1.0" stop-color="#ffc7b7"/></linearGradient>
<rect x="428.5" y="892.36" width="273.0" height="5.91" fill="url(#cie13)" shape-rendering="crispEdges"/>
<linearGradient id="cie14" x1="0" y1="0" x2="1" y2="0"><stop offset="0.0" stop-color="#a0fff2"/><stop offset="0.1" stop-color="#b1fff2"/><stop offset="0.2" stop-color="#c2fff2"/><stop offset="0.3" stop-color="#d2fff1"/><stop offset="0.4" stop-color="#e3fff1"/><stop offset="0.5" stop-color="#f3fff1"/><stop offset="0.6" stop-color="#fffbed"/><stop offset="0.7" stop-color="#ffecdf"/><stop offset="0.8" stop-color="#ffded1"/><stop offset="0.9" stop-color="#ffd1c4"/><stop offset="1.0" stop-color="#ffc5b7"/></linearGradient>
<rect x="428.5" y="897.27" width="273.0" height="5.91" fill="url(#cie14)" shape-rendering="crispEdges"/>
<linearGradient id="cie15" x1="0" y1="0" x2="1" y2="0"><stop offset="0.0" stop-color="#a2fff4"/><stop offset="0.1" stop-color="#b3fff4"/><stop offset="0.2" stop-color="#c4fff4"/><stop offset="0.3" stop-color="#d5fff4"/><stop offset="0.4" stop-color="#e5fff4"/><stop offset="0.5" stop-color="#f5fff4"/><stop offset="0.6" stop-color="#fff9ee"/><stop offset="0.7" stop-color="#ffeadf"/><stop offset="0.8" stop-color="#ffdcd1"/><stop offset="0.9" stop-color="#ffcfc4"/><stop offset="1.0" stop-color="#ffc3b8"/></linearGradient>
<rect x="428.5" y="902.19" width="273.0" height="5.91" fill="url(#cie15)" shape-rendering="crispEdges"/>
<linearGradient id="cie16" x1="0" y1="0" x2="1" y2="0"><stop offset="0.0" stop-color="#a4fff7"/><stop offset="0.1" stop-color="#b5fff6"/><stop offset="0.2" stop-color="#c6fff6"/><stop offset="0.3" stop-color="#d7fff6"/><stop offset="0.4" stop-color="#e7fff6"/><stop offset="0.5" stop-color="#f7fff6"/><stop offset="0.6" stop-color="#fff7ee"/><stop offset="0.7" stop-color="#ffe8df"/><stop offset="0.8" stop-color="#ffdad1"/><stop offset="0.9" stop-color="#ffcdc4"/><stop offset="1.0" stop-color="#ffc0b8"/></linearGradient>
<rect x="428.5" y="907.10" width="273.0" height="5.91" fill="url(#cie16)" shape-rendering="crispEdges"/>
<linearGradient id="cie17" x1="0" y1="0" x2="1" y2="0"><stop offset="0.0" stop-color="#a6fff9"/><stop offset="0.1" stop-color="#b8fff9"/><stop offset="0.2" stop-color="#c9fff9"/><stop offset="0.3" stop-color="#d9fff9"/><stop offset="0.4" stop-color="#eafff9"/><stop offset="0.5" stop-color="#fafff9"/><stop offset="0.6" stop-color="#fff4ee"/><stop offset="0.7" stop-color="#ffe6df"/><stop offset="0.8" stop-color="#ffd8d2"/><stop offset="0.9" stop-color="#ffcbc5"/><stop offset="1.0" stop-color="#ffbeb9"/></linearGradient>
<rect x="428.5" y="912.01" width="273.0" height="5.91" fill="url(#cie17)" shape-rendering="crispEdges"/>
<linearGradient id="cie18" x1="0" y1="0" x2="1" y2="0"><stop offset="0.0" stop-color="#a8fffb"/><stop offset="0.1" stop-color="#bafffb"/><stop offset="0.2" stop-color="#cbfffb"/><stop offset="0.3" stop-color="#dcfffb"/><stop offset="0.4" stop-color="#ecfffb"/><stop offset="0.5" stop-color="#fcfffb"/><stop offset="0.6" stop-color="#fff2ee"/><stop offset="0.7" stop-color="#ffe3e0"/><stop offset="0.8" stop-color="#ffd6d2"/><stop offset="0.9" stop-color="#ffc9c5"/><stop offset="1.0" stop-color="#ffbcb9"/></linearGradient>
<rect x="428.5" y="916.92" width="273.0" height="5.91" fill="url(#cie18)" shape-rendering="crispEdges"/>
<linearGradient id="cie19" x1="0" y1="0" x2="1" y2="0"><stop offset="0.0" stop-color="#abfffe"/><stop offset="0.1" stop-color="#bcfffe"/><stop offset="0.2" stop-color="#cdfffe"/><stop offset="0.3" stop-color="#defffe"/><stop offset="0.4" stop-color="#eefffe"/><stop offset="0.5" stop-color="#fffffe"/><stop offset="0.6" stop-color="#fff0ef"/><stop offset="0.7" stop-color="#ffe1e0"/><stop offset="0.8" stop-color="#ffd3d2"/><stop offset="0.9" stop-color="#ffc7c6"/><stop offset="1.0" stop-color="#ffbab9"/></linearGradient>
<rect x="428.5" y="921.84" width="273.0" height="5.91" fill="url(#cie19)" shape-rendering="crispEdges"/>
<linearGradient id="cie20" x1="0" y1="0" x2="1" y2="0"><stop offset="0.0" stop-color="#acfeff"/><stop offset="0.1" stop-color="#bdfeff"/><stop offset="0.2" stop-color="#cefeff"/><stop offset="0.3" stop-color="#dffeff"/><stop offset="0.4" stop-color="#effeff"/><stop offset="0.5" stop-color="#fffdfe"/><stop offset="0.6" stop-color="#ffedef"/><stop offset="0.7" stop-color="#ffdfe0"/><stop offset="0.8" stop-color="#ffd1d3"/><stop offset="0.9" stop-color="#ffc4c6"/><stop offset="1.0" stop-color="#ffb8ba"/></linearGradient>
<rect x="428.5" y="926.75" width="273.0" height="5.91" fill="url(#cie20)" shape-rendering="crispEdges"/>
<linearGradient id="cie21" x1="0" y1="0" x2="1" y2="0"><stop offset="0.0" stop-color="#acfbff"/><stop offset="0.1" stop-color="#bdfbff"/><stop offset="0.2" stop-color="#cefbff"/><stop offset="0.3" stop-color="#dffbff"/><stop offset="0.4" stop-color="#effbff"/><stop offset="0.5" stop-color="#fffbff"/><stop offset="0.6" stop-color="#ffebef"/><stop offset="0.7" stop-color="#ffdde1"/><stop offset="0.8" stop-color="#ffcfd3"/><stop offset="0.9" stop-color="#ffc2c6"/><stop offset="1.0" stop-color="#ffb6ba"/></linearGradient>
<rect x="428.5" y="931.66" width="273.0" height="5.91" fill="url(#cie21)" shape-rendering="crispEdges"/>
<linearGradient id="cie22" x1="0" y1="0" x2="1" y2="0"><stop offset="0.0" stop-color="#acf9ff"/><stop offset="0.1" stop-color="#bdf9ff"/><stop offset="0.2" stop-color="#cef9ff"/><stop offset="0.3" stop-color="#dff9ff"/><stop offset="0.4" stop-color="#eff8ff"/><stop offset="0.5" stop-color="#fff8ff"/><stop offset="0.6" stop-color="#ffe9ef"/><stop offset="0.7" stop-color="#ffdae1"/><stop offset="0.8" stop-color="#ffcdd3"/><stop offset="0.9" stop-color="#ffc0c7"/><stop offset="1.0" stop-color="#ffb4bb"/></linearGradient>
<rect x="428.5" y="936.58" width="273.0" height="5.91" fill="url(#cie22)" shape-rendering="crispEdges"/>
<linearGradient id="cie23" x1="0" y1="0" x2="1" y2="0"><stop offset="0.0" stop-color="#acf7ff"/><stop offset="0.1" stop-color="#bef6ff"/><stop offset="0.2" stop-color="#cef6ff"/><stop offset="0.3" stop-color="#dff6ff"/><stop offset="0.4" stop-color="#eff6ff"/><stop offset="0.5" stop-color="#fff6ff"/><stop offset="0.6" stop-color="#ffe6f0"/><stop offset="0.7" stop-color="#ffd8e1"/><stop offset="0.8" stop-color="#ffcbd4"/><stop offset="0.9" stop-color="#ffbec7"/><stop offset="1.0" stop-color="#ffb2bb"/></linearGradient>
<rect x="428.5" y="941.49" width="273.0" height="5.91" fill="url(#cie23)" shape-rendering="crispEdges"/>
<linearGradient id="cie24" x1="0" y1="0" x2="1" y2="0"><stop offset="0.0" stop-color="#adf4ff"/><stop offset="0.1" stop-color="#bef4ff"/><stop offset="0.2" stop-color="#cef4ff"/><stop offset="0.3" stop-color="#dff4ff"/><stop offset="0.4" stop-color="#eff3ff"/><stop offset="0.5" stop-color="#fff3ff"/><stop offset="0.6" stop-color="#ffe4f0"/><stop offset="0.7" stop-color="#ffd6e2"/><stop offset="0.8" stop-color="#ffc9d4"/><stop offset="0.9" stop-color="#ffbcc7"/><stop offset="1.0" stop-color="#ffb0bb"/></linearGradient>
<rect x="428.5" y="946.40" width="273.0" height="5.91" fill="url(#cie24)" shape-rendering="crispEdges"/>
<linearGradient id="cie25" x1="0" y1="0" x2="1" y2="0"><stop offset="0.0" stop-color="#adf2ff"/><stop offset="0.1" stop-color="#bef1ff"/><stop offset="0.2" stop-color="#cef1ff"/><stop offset="0.3" stop-color="#dff1ff"/><stop offset="0.4" stop-color="#eff1ff"/><stop offset="0.5" stop-color="#fff1ff"/><stop offset="0.6" stop-color="#ffe2f0"/><stop offset="0.7" stop-color="#ffd4e2"/><stop offset="0.8" stop-color="#ffc6d4"/><stop offset="0.9" stop-color="#ffbac8"/><stop offset="1.0" stop-color="#ffaebc"/></linearGradient>
<rect x="428.5" y="951.31" width="273.0" height="5.91" fill="url(#cie25)" shape-rendering="crispEdges"/>
<linearGradient id="cie26" x1="0" y1="0" x2="1" y2="0"><stop offset="0.0" stop-color="#adefff"/><stop offset="0.1" stop-color="#beefff"/><stop offset="0.2" stop-color="#ceefff"/><stop offset="0.3" stop-color="#dfefff"/><stop offset="0.4" stop-color="#efeeff"/><stop offset="0.5" stop-color="#feeeff"/><stop offset="0.6" stop-color="#ffdff0"/><stop offset="0.7" stop-color="#ffd1e2"/><stop offset="0.8" stop-color="#ffc4d5"/><stop offset="0.9" stop-color="#ffb8c8"/><stop offset="1.0" stop-color="#ffacbc"/></linearGradient>
<rect x="428.5" y="956.23" width="273.0" height="5.91" fill="url(#cie26)" shape-rendering="crispEdges"/>
<linearGradient id="cie27" x1="0" y1="0" x2="1" y2="0"><stop offset="0.0" stop-color="#adedff"/><stop offset="0.1" stop-color="#beedff"/><stop offset="0.2" stop-color="#ceecff"/><stop offset="0.3" stop-color="#dfecff"/><stop offset="0.4" stop-color="#efecff"/><stop offset="0.5" stop-color="#feebff"/><stop offset="0.6" stop-color="#ffddf1"/><stop offset="0.7" stop-color="#ffcfe2"/><stop offset="0.8" stop-color="#ffc2d5"/><stop offset="0.9" stop-color="#ffb6c8"/><stop offset="1.0" stop-color="#ffaabd"/></linearGradient>
<rect x="428.5" y="961.14" width="273.0" height="5.91" fill="url(#cie27)" shape-rendering="crispEdges"/>
<linearGradient id="cie28" x1="0" y1="0" x2="1" y2="0"><stop offset="0.0" stop-color="#adebff"/><stop offset="0.1" stop-color="#beeaff"/><stop offset="0.2" stop-color="#cfeaff"/><stop offset="0.3" stop-color="#dfeaff"/><stop offset="0.4" stop-color="#eee9ff"/><stop offset="0.5" stop-color="#fee9ff"/><stop offset="0.6" stop-color="#ffdbf1"/><stop offset="0.7" stop-color="#ffcde3"/><stop offset="0.8" stop-color="#ffc0d5"/><stop offset="0.9" stop-color="#ffb3c9"/><stop offset="1.0" stop-color="#ffa8bd"/></linearGradient>
<rect x="428.5" y="966.05" width="273.0" height="5.91" fill="url(#cie28)" shape-rendering="crispEdges"/>
<linearGradient id="cie29" x1="0" y1="0" x2="1" y2="0"><stop offset="0.0" stop-color="#aee8ff"/><stop offset="0.1" stop-color="#bee8ff"/><stop offset="0.2" stop-color="#cfe7ff"/><stop offset="0.3" stop-color="#dfe7ff"/><stop offset="0.4" stop-color="#eee7ff"/><stop offset="0.5" stop-color="#fee6ff"/><stop offset="0.6" stop-color="#ffd9f1"/><stop offset="0.7" stop-color="#ffcbe3"/><stop offset="0.8" stop-color="#ffbed6"/><stop offset="0.9" stop-color="#ffb1c9"/><stop offset="1.0" stop-color="#ffa6bd"/></linearGradient>
<rect x="428.5" y="970.96" width="273.0" height="5.91" fill="url(#cie29)" shape-rendering="crispEdges"/>
<linearGradient id="cie30" x1="0" y1="0" x2="1" y2="0"><stop offset="0.0" stop-color="#aee6ff"/><stop offset="0.1" stop-color="#bee5ff"/><stop offset="0.2" stop-color="#cfe5ff"/><stop offset="0.3" stop-color="#dfe5ff"/><stop offset="0.4" stop-color="#eee4ff"/><stop offset="0.5" stop-color="#fee4ff"/><stop offset="0.6" stop-color="#ffd6f1"/><stop offset="0.7" stop-color="#ffc8e3"/><stop offset="0.8" stop-color="#ffbcd6"/><stop offset="0.9" stop-color="#ffafca"/><stop offset="1.0" stop-color="#ffa4be"/></linearGradient>
<rect x="428.5" y="975.88" width="273.0" height="5.91" fill="url(#cie30)" shape-rendering="crispEdges"/>
<linearGradient id="cie31" x1="0" y1="0" x2="1" y2="0"><stop offset="0.0" stop-color="#aee3ff"/><stop offset="0.1" stop-color="#bee3ff"/><stop offset="0.2" stop-color="#cfe3ff"/><stop offset="0.3" stop-color="#dee2ff"/><stop offset="0.4" stop-color="#eee2ff"/><stop offset="0.5" stop-color="#fee1ff"/><stop offset="0.6" stop-color="#ffd4f1"/><stop offset="0.7" stop-color="#ffc6e3"/><stop offset="0.8" stop-color="#ffb9d6"/><stop offset="0.9" stop-color="#ffadca"/><stop offset="1.0" stop-color="#ffa2be"/></linearGradient>
<rect x="428.5" y="980.79" width="273.0" height="5.91" fill="url(#cie31)" shape-rendering="crispEdges"/>
<linearGradient id="cie32" x1="0" y1="0" x2="1" y2="0"><stop offset="0.0" stop-color="#aee1ff"/><stop offset="0.1" stop-color="#bfe1ff"/><stop offset="0.2" stop-color="#cfe0ff"/><stop offset="0.3" stop-color="#dee0ff"/><stop offset="0.4" stop-color="#eedfff"/><stop offset="0.5" stop-color="#fddfff"/><stop offset="0.6" stop-color="#ffd2f2"/><stop offset="0.7" stop-color="#ffc4e4"/><stop offset="0.8" stop-color="#ffb7d7"/><stop offset="0.9" stop-color="#ffabca"/><stop offset="1.0" stop-color="#ffa0be"/></linearGradient>
<rect x="428.5" y="985.70" width="273.0" height="5.91" fill="url(#cie32)" shape-rendering="crispEdges"/>
<linearGradient id="cie33" x1="0" y1="0" x2="1" y2="0"><stop offset="0.0" stop-color="#aedfff"/><stop offset="0.1" stop-color="#bfdeff"/><stop offset="0.2" stop-color="#cfdeff"/><stop offset="0.3" stop-color="#deddff"/><stop offset="0.4" stop-color="#eeddff"/><stop offset="0.5" stop-color="#fddcff"/><stop offset="0.6" stop-color="#ffcff2"/><stop offset="0.7" stop-color="#ffc2e4"/><stop offset="0.8" stop-color="#ffb5d7"/><stop offset="0.9" stop-color="#ffa9cb"/><stop offset="1.0" stop-color="#ff9dbf"/></linearGradient>
<rect x="428.5" y="990.61" width="273.0" height="5.91" fill="url(#cie33)" shape-rendering="crispEdges"/>
<linearGradient id="cie34" x1="0" y1="0" x2="1" y2="0"><stop offset="0.0" stop-color="#aedcff"/><stop offset="0.1" stop-color="#bfdcff"/><stop offset="0.2" stop-color="#cfdbff"/><stop offset="0.3" stop-color="#dedbff"/><stop offset="0.4" stop-color="#eedaff"/><stop offset="0.5" stop-color="#fddaff"/><stop offset="0.6" stop-color="#ffcdf2"/><stop offset="0.7" stop-color="#ffc0e4"/><stop offset="0.8" stop-color="#ffb3d7"/><stop offset="0.9" stop-color="#ffa7cb"/><stop offset="1.0" stop-color="#ff9bbf"/></linearGradient>
<rect x="428.5" y="995.52" width="273.0" height="5.91" fill="url(#cie34)" shape-rendering="crispEdges"/>
<linearGradient id="cie35" x1="0" y1="0" x2="1" y2="0"><stop offset="0.0" stop-color="#afdaff"/><stop offset="0.1" stop-color="#bfd9ff"/><stop offset="0.2" stop-color="#cfd9ff"/><stop offset="0.3" stop-color="#ded8ff"/><stop offset="0.4" stop-color="#eed8ff"/><stop offset="0.5" stop-color="#fdd7ff"/><stop offset="0.6" stop-color="#ffcbf2"/><stop offset="0.7" stop-color="#ffbde5"/><stop offset="0.8" stop-color="#ffb1d8"/><stop offset="0.9" stop-color="#ffa5cb"/><stop offset="1.0" stop-color="#ff99c0"/></linearGradient>
<rect x="428.5" y="1000.44" width="273.0" height="5.91" fill="url(#cie35)" shape-rendering="crispEdges"/>
<linearGradient id="cie36" x1="0" y1="0" x2="1" y2="0"><stop offset="0.0" stop-color="#afd8ff"/><stop offset="0.1" stop-color="#bfd7ff"/><stop offset="0.2" stop-color="#cfd6ff"/><stop offset="0.3" stop-color="#ded6ff"/><stop offset="0.4" stop-color="#eed5ff"/><stop offset="0.5" stop-color="#fdd4ff"/><stop offset="0.6" stop-color="#ffc8f3"/><stop offset="0.7" stop-color="#ffbbe5"/><stop offset="0.8" stop-color="#ffaed8"/><stop offset="0.9" stop-color="#ffa3cc"/><stop offset="1.0" stop-color="#ff97c0"/></linearGradient>
<rect x="428.5" y="1005.35" width="273.0" height="5.91" fill="url(#cie36)" shape-rendering="crispEdges"/>
<linearGradient id="cie37" x1="0" y1="0" x2="1" y2="0"><stop offset="0.0" stop-color="#afd5ff"/><stop offset="0.1" stop-color="#bfd5ff"/><stop offset="0.2" stop-color="#cfd4ff"/><stop offset="0.3" stop-color="#ded3ff"/><stop offset="0.4" stop-color="#eed3ff"/><stop offset="0.5" stop-color="#fdd2ff"/><stop offset="0.6" stop-color="#ffc6f3"/><stop offset="0.7" stop-color="#ffb9e5"/><stop offset="0.8" stop-color="#ffacd8"/><stop offset="0.9" stop-color="#ffa0cc"/><stop offset="1.0" stop-color="#ff95c0"/></linearGradient>
<rect x="428.5" y="1010.26" width="273.0" height="5.91" fill="url(#cie37)" shape-rendering="crispEdges"/>
<linearGradient id="cie38" x1="0" y1="0" x2="1" y2="0"><stop offset="0.0" stop-color="#afd3ff"/><stop offset="0.1" stop-color="#bfd2ff"/><stop offset="0.2" stop-color="#cfd2ff"/><stop offset="0.3" stop-color="#ded1ff"/><stop offset="0.4" stop-color="#edd0ff"/><stop offset="0.5" stop-color="#fccfff"/><stop offset="0.6" stop-color="#ffc4f3"/><stop offset="0.7" stop-color="#ffb7e5"/><stop offset="0.8" stop-color="#ffaad8"/><stop offset="0.9" stop-color="#ff9ecc"/><stop offset="1.0" stop-color="#ff93c1"/></linearGradient>
<rect x="428.5" y="1015.17" width="273.0" height="5.91" fill="url(#cie38)" shape-rendering="crispEdges"/>
<linearGradient id="cie39" x1="0" y1="0" x2="1" y2="0"><stop offset="0.0" stop-color="#afd1ff"/><stop offset="0.1" stop-color="#bfd0ff"/><stop offset="0.2" stop-color="#cfcfff"/><stop offset="0.3" stop-color="#deceff"/><stop offset="0.4" stop-color="#edceff"/><stop offset="0.5" stop-color="#fccdff"/><stop offset="0.6" stop-color="#ffc1f3"/><stop offset="0.7" stop-color="#ffb4e6"/><stop offset="0.8" stop-color="#ffa8d9"/><stop offset="0.9" stop-color="#ff9ccd"/><stop offset="1.0" stop-color="#ff91c1"/></linearGradient>
<rect x="428.5" y="1020.09" width="273.0" height="5.91" fill="url(#cie39)" shape-rendering="crispEdges"/>
<rect x="427.5" y="827.5" width="275.0" height="198.5" fill="none" stroke="#7a7a7a" stroke-width="2"/>
<svg x="428.5" y="828.5" width="273" height="196.5" viewBox="428.5 828.5 273 196.5" overflow="hidden"><path d="M460 1030 Q560 952 705 858" fill="none" stroke="#000" stroke-width="3.2"/></svg>
<rect x="421" y="842.4" width="7" height="2" fill="#d8d8d8"/>
<text stroke="#e6e6e6" stroke-width="0.31" x="420" y="848.9" font-size="15.5" fill="#e6e6e6" text-anchor="end">0,35</text>
<rect x="421" y="882.0" width="7" height="2" fill="#d8d8d8"/>
<text stroke="#e6e6e6" stroke-width="0.31" x="420" y="888.5" font-size="15.5" fill="#e6e6e6" text-anchor="end">0,34</text>
<rect x="421" y="921.5" width="7" height="2" fill="#d8d8d8"/>
<text stroke="#e6e6e6" stroke-width="0.31" x="420" y="928.0" font-size="15.5" fill="#e6e6e6" text-anchor="end">0,33</text>
<rect x="421" y="961.1" width="7" height="2" fill="#d8d8d8"/>
<text stroke="#e6e6e6" stroke-width="0.31" x="420" y="967.6" font-size="15.5" fill="#e6e6e6" text-anchor="end">0,32</text>
<rect x="421" y="1000.7" width="7" height="2" fill="#d8d8d8"/>
<text stroke="#e6e6e6" stroke-width="0.31" x="420" y="1007.2" font-size="15.5" fill="#e6e6e6" text-anchor="end">0,31</text>
<rect x="438.8" y="1026" width="2" height="7" fill="#d8d8d8"/>
<text stroke="#e6e6e6" stroke-width="0.31" x="439.8" y="1050" font-size="15.5" fill="#e6e6e6" text-anchor="middle">0,29</text>
<rect x="493.4" y="1026" width="2" height="7" fill="#d8d8d8"/>
<text stroke="#e6e6e6" stroke-width="0.31" x="494.4" y="1050" font-size="15.5" fill="#e6e6e6" text-anchor="middle">0,3</text>
<rect x="548.0" y="1026" width="2" height="7" fill="#d8d8d8"/>
<text stroke="#e6e6e6" stroke-width="0.31" x="549.0" y="1050" font-size="15.5" fill="#e6e6e6" text-anchor="middle">0,31</text>
<rect x="602.6" y="1026" width="2" height="7" fill="#d8d8d8"/>
<text stroke="#e6e6e6" stroke-width="0.31" x="603.6" y="1050" font-size="15.5" fill="#e6e6e6" text-anchor="middle">0,32</text>
<rect x="657.2" y="1026" width="2" height="7" fill="#d8d8d8"/>
<text stroke="#e6e6e6" stroke-width="0.31" x="658.2" y="1050" font-size="15.5" fill="#e6e6e6" text-anchor="middle">0,33</text>
<circle cx="527.5" cy="932.5" r="5.2" fill="#333" stroke="#0a0a0a" stroke-width="1.3"/>
<circle cx="520.0" cy="928.5" r="5.2" fill="#444" stroke="#0a0a0a" stroke-width="1.3"/>
<circle cx="526.8" cy="929.5" r="5.2" fill="#a8a8a8" stroke="#0a0a0a" stroke-width="1.3"/>
<circle cx="531.8" cy="926.2" r="5.2" fill="#d4d4d4" stroke="#0a0a0a" stroke-width="1.3"/>
<circle cx="536.2" cy="923.2" r="5.2" fill="#ececec" stroke="#0a0a0a" stroke-width="1.3"/>
<circle cx="539.8" cy="920.1" r="5.2" fill="#fdfdfd" stroke="#0a0a0a" stroke-width="1.3"/>
<circle cx="528.6" cy="912.4" r="5.2" fill="#1c1c1c" stroke="#0a0a0a" stroke-width="1.3"/>
<rect x="557" y="919.5" width="15" height="15" fill="#fff" stroke="#000" stroke-width="2"/>
<rect x="721.5" y="801" width="1105.5" height="242" fill="#000"/>
<rect x="723" y="802.5" width="1102.5" height="16" fill="#303030"/>
<rect x="723" y="818.3" width="1102.5" height="16" fill="#151515"/>
<text x="940.0" y="825" font-size="17.5" fill="#f4f4f4" stroke="#f4f4f4" stroke-width="0.3" text-anchor="middle">0</text>
<text x="1024.2" y="825" font-size="17.5" fill="#f4f4f4" stroke="#f4f4f4" stroke-width="0.3" text-anchor="middle">10</text>
<text x="1108.4" y="825" font-size="17.5" fill="#f4f4f4" stroke="#f4f4f4" stroke-width="0.3" text-anchor="middle">20</text>
<text x="1192.6" y="825" font-size="17.5" fill="#f4f4f4" stroke="#f4f4f4" stroke-width="0.3" text-anchor="middle">30</text>
<text x="1276.8" y="825" font-size="17.5" fill="#f4f4f4" stroke="#f4f4f4" stroke-width="0.3" text-anchor="middle">40</text>
<text x="1361.0" y="825" font-size="17.5" fill="#f4f4f4" stroke="#f4f4f4" stroke-width="0.3" text-anchor="middle">50</text>
<text x="1445.2" y="825" font-size="17.5" fill="#f4f4f4" stroke="#f4f4f4" stroke-width="0.3" text-anchor="middle">60</text>
<text x="1529.4" y="825" font-size="17.5" fill="#f4f4f4" stroke="#f4f4f4" stroke-width="0.3" text-anchor="middle">70</text>
<text x="1613.6" y="825" font-size="17.5" fill="#f4f4f4" stroke="#f4f4f4" stroke-width="0.3" text-anchor="middle">80</text>
<text x="1697.8" y="825" font-size="17.5" fill="#f4f4f4" stroke="#f4f4f4" stroke-width="0.3" text-anchor="middle">90</text>
<text x="1782.0" y="825" font-size="17.5" fill="#f4f4f4" stroke="#f4f4f4" stroke-width="0.3" text-anchor="middle">100</text>
<rect x="723" y="834.4" width="1102.5" height="29.9" fill="#424242"/>
<rect x="723" y="833.9" width="1102.5" height="1" fill="#353535"/>
<text stroke="#f2f2f2" stroke-width="0.18" x="737" y="855.9" font-size="18" font-weight="bold" fill="#f2f2f2" textLength="68.4" lengthAdjust="spacingAndGlyphs">x: CIE31</text>
<text stroke="#f0f0f0" stroke-width="0.36" x="902.5" y="855.9" font-size="18" fill="#f0f0f0">0,300</text>
<text stroke="#f0f0f0" stroke-width="0.36" x="986.7" y="855.9" font-size="18" fill="#f0f0f0">0,306</text>
<text stroke="#f0f0f0" stroke-width="0.36" x="1070.9" y="855.9" font-size="18" fill="#f0f0f0">0,305</text>
<text stroke="#f0f0f0" stroke-width="0.36" x="1155.1" y="855.9" font-size="18" fill="#f0f0f0">0,307</text>
<text stroke="#f0f0f0" stroke-width="0.36" x="1239.3" y="855.9" font-size="18" fill="#f0f0f0">0,306</text>
<text stroke="#f0f0f0" stroke-width="0.36" x="1323.5" y="855.9" font-size="18" fill="#f0f0f0">0,306</text>
<text stroke="#f0f0f0" stroke-width="0.36" x="1407.7" y="855.9" font-size="18" fill="#f0f0f0">0,306</text>
<text stroke="#f0f0f0" stroke-width="0.36" x="1491.9" y="855.9" font-size="18" fill="#f0f0f0">0,307</text>
<text stroke="#f0f0f0" stroke-width="0.36" x="1576.1" y="855.9" font-size="18" fill="#f0f0f0">0,307</text>
<text stroke="#f0f0f0" stroke-width="0.36" x="1660.3" y="855.9" font-size="18" fill="#f0f0f0">0,308</text>
<text stroke="#f0f0f0" stroke-width="0.36" x="1744.5" y="855.9" font-size="18" fill="#f0f0f0">0,308</text>
<rect x="723" y="864.3" width="1102.5" height="29.9" fill="#808080"/>
<rect x="723" y="865.3" width="1102.5" height="1" fill="#8a8a8a"/>
<rect x="723" y="892.2" width="1102.5" height="1" fill="#8a8a8a"/>
<rect x="723" y="863.8" width="1102.5" height="1" fill="#353535"/>
<text stroke="#f2f2f2" stroke-width="0.18" x="737" y="885.8" font-size="18" font-weight="bold" fill="#f2f2f2" textLength="68.4" lengthAdjust="spacingAndGlyphs">y: CIE31</text>
<text stroke="#f0f0f0" stroke-width="0.36" x="902.5" y="885.8" font-size="18" fill="#f0f0f0">0,261</text>
<text stroke="#f0f0f0" stroke-width="0.36" x="986.7" y="885.8" font-size="18" fill="#f0f0f0">0,332</text>
<text stroke="#f0f0f0" stroke-width="0.36" x="1070.9" y="885.8" font-size="18" fill="#f0f0f0">0,328</text>
<text stroke="#f0f0f0" stroke-width="0.36" x="1155.1" y="885.8" font-size="18" fill="#f0f0f0">0,329</text>
<text stroke="#f0f0f0" stroke-width="0.36" x="1239.3" y="885.8" font-size="18" fill="#f0f0f0">0,328</text>
<text stroke="#f0f0f0" stroke-width="0.36" x="1323.5" y="885.8" font-size="18" fill="#f0f0f0">0,328</text>
<text stroke="#f0f0f0" stroke-width="0.36" x="1407.7" y="885.8" font-size="18" fill="#f0f0f0">0,328</text>
<text stroke="#f0f0f0" stroke-width="0.36" x="1491.9" y="885.8" font-size="18" fill="#f0f0f0">0,329</text>
<text stroke="#f0f0f0" stroke-width="0.36" x="1576.1" y="885.8" font-size="18" fill="#f0f0f0">0,329</text>
<text stroke="#f0f0f0" stroke-width="0.36" x="1660.3" y="885.8" font-size="18" fill="#f0f0f0">0,330</text>
<text stroke="#f0f0f0" stroke-width="0.36" x="1744.5" y="885.8" font-size="18" fill="#f0f0f0">0,330</text>
<rect x="723" y="894.2" width="1102.5" height="29.9" fill="#424242"/>
<rect x="723" y="893.7" width="1102.5" height="1" fill="#353535"/>
<text stroke="#f2f2f2" stroke-width="0.18" x="737" y="915.7" font-size="18" font-weight="bold" fill="#f2f2f2" textLength="12" lengthAdjust="spacingAndGlyphs">Y</text>
<text stroke="#f0f0f0" stroke-width="0.36" x="902.5" y="915.7" font-size="18" fill="#f0f0f0">0,043</text>
<text stroke="#f0f0f0" stroke-width="0.36" x="986.7" y="915.7" font-size="18" fill="#f0f0f0">4,289</text>
<text stroke="#f0f0f0" stroke-width="0.36" x="1070.9" y="915.7" font-size="18" fill="#f0f0f0">18,635</text>
<text stroke="#f0f0f0" stroke-width="0.36" x="1155.1" y="915.7" font-size="18" fill="#f0f0f0">45,496</text>
<text stroke="#f0f0f0" stroke-width="0.36" x="1239.3" y="915.7" font-size="18" fill="#f0f0f0">87,854</text>
<text stroke="#f0f0f0" stroke-width="0.36" x="1323.5" y="915.7" font-size="18" fill="#f0f0f0">144,032</text>
<text stroke="#f0f0f0" stroke-width="0.36" x="1407.7" y="915.7" font-size="18" fill="#f0f0f0">216,518</text>
<text stroke="#f0f0f0" stroke-width="0.36" x="1491.9" y="915.7" font-size="18" fill="#f0f0f0">304,254</text>
<text stroke="#f0f0f0" stroke-width="0.36" x="1576.1" y="915.7" font-size="18" fill="#f0f0f0">410,097</text>
<text stroke="#f0f0f0" stroke-width="0.36" x="1660.3" y="915.7" font-size="18" fill="#f0f0f0">540,282</text>
<text stroke="#f0f0f0" stroke-width="0.36" x="1744.5" y="915.7" font-size="18" fill="#f0f0f0">688,314</text>
<rect x="723" y="924.1" width="1102.5" height="29.9" fill="#808080"/>
<rect x="723" y="925.1" width="1102.5" height="1" fill="#8a8a8a"/>
<rect x="723" y="952.0" width="1102.5" height="1" fill="#8a8a8a"/>
<rect x="723" y="923.6" width="1102.5" height="1" fill="#353535"/>
<text stroke="#f2f2f2" stroke-width="0.18" x="737" y="945.6" font-size="18" font-weight="bold" fill="#f2f2f2" textLength="72" lengthAdjust="spacingAndGlyphs">Target Y</text>
<text stroke="#f0f0f0" stroke-width="0.36" x="902.5" y="945.6" font-size="18" fill="#f0f0f0">0,000</text>
<text stroke="#f0f0f0" stroke-width="0.36" x="986.7" y="945.6" font-size="18" fill="#f0f0f0">7,110</text>
<text stroke="#f0f0f0" stroke-width="0.36" x="1070.9" y="945.6" font-size="18" fill="#f0f0f0">22,786</text>
<text stroke="#f0f0f0" stroke-width="0.36" x="1155.1" y="945.6" font-size="18" fill="#f0f0f0">49,746</text>
<text stroke="#f0f0f0" stroke-width="0.36" x="1239.3" y="945.6" font-size="18" fill="#f0f0f0">91,455</text>
<text stroke="#f0f0f0" stroke-width="0.36" x="1323.5" y="945.6" font-size="18" fill="#f0f0f0">148,580</text>
<text stroke="#f0f0f0" stroke-width="0.36" x="1407.7" y="945.6" font-size="18" fill="#f0f0f0">219,260</text>
<text stroke="#f0f0f0" stroke-width="0.36" x="1491.9" y="945.6" font-size="18" fill="#f0f0f0">306,438</text>
<text stroke="#f0f0f0" stroke-width="0.36" x="1576.1" y="945.6" font-size="18" fill="#f0f0f0">415,623</text>
<text stroke="#f0f0f0" stroke-width="0.36" x="1660.3" y="945.6" font-size="18" fill="#f0f0f0">544,661</text>
<text stroke="#f0f0f0" stroke-width="0.36" x="1744.5" y="945.6" font-size="18" fill="#f0f0f0">688,314</text>
<rect x="723" y="954.0" width="1102.5" height="29.9" fill="#424242"/>
<rect x="723" y="953.5" width="1102.5" height="1" fill="#353535"/>
<text stroke="#f2f2f2" stroke-width="0.18" x="737" y="975.5" font-size="18" font-weight="bold" fill="#f2f2f2" textLength="146.5" lengthAdjust="spacingAndGlyphs">Gamma Log/Log</text>
<text stroke="#f0f0f0" stroke-width="0.36" x="902.5" y="975.5" font-size="18" fill="#f0f0f0">1,278</text>
<text stroke="#f0f0f0" stroke-width="0.36" x="986.7" y="975.5" font-size="18" fill="#f0f0f0">2,224</text>
<text stroke="#f0f0f0" stroke-width="0.36" x="1070.9" y="975.5" font-size="18" fill="#f0f0f0">2,243</text>
<text stroke="#f0f0f0" stroke-width="0.36" x="1155.1" y="975.5" font-size="18" fill="#f0f0f0">2,244</text>
<text stroke="#f0f0f0" stroke-width="0.36" x="1239.3" y="975.5" font-size="18" fill="#f0f0f0">2,247</text>
<text stroke="#f0f0f0" stroke-width="0.36" x="1323.5" y="975.5" font-size="18" fill="#f0f0f0">2,269</text>
<text stroke="#f0f0f0" stroke-width="0.36" x="1407.7" y="975.5" font-size="18" fill="#f0f0f0">2,264</text>
<text stroke="#f0f0f0" stroke-width="0.36" x="1491.9" y="975.5" font-size="18" fill="#f0f0f0">2,271</text>
<text stroke="#f0f0f0" stroke-width="0.36" x="1576.1" y="975.5" font-size="18" fill="#f0f0f0">2,321</text>
<text stroke="#f0f0f0" stroke-width="0.36" x="1660.3" y="975.5" font-size="18" fill="#f0f0f0">2,347</text>
<text stroke="#f0f0f0" stroke-width="0.36" x="1744.5" y="975.5" font-size="18" fill="#f0f0f0">2,275</text>
<rect x="723" y="983.9" width="1102.5" height="29.9" fill="#808080"/>
<rect x="723" y="984.9" width="1102.5" height="1" fill="#8a8a8a"/>
<rect x="723" y="1011.8" width="1102.5" height="1" fill="#8a8a8a"/>
<rect x="723" y="983.4" width="1102.5" height="1" fill="#353535"/>
<text stroke="#f2f2f2" stroke-width="0.18" x="737" y="1005.4" font-size="18" font-weight="bold" fill="#f2f2f2" textLength="33" lengthAdjust="spacingAndGlyphs">CCT</text>
<text stroke="#f0f0f0" stroke-width="0.36" x="902.5" y="1005.4" font-size="18" fill="#f0f0f0">9071,000</text>
<text stroke="#f0f0f0" stroke-width="0.36" x="986.7" y="1005.4" font-size="18" fill="#f0f0f0">6834,000</text>
<text stroke="#f0f0f0" stroke-width="0.36" x="1070.9" y="1005.4" font-size="18" fill="#f0f0f0">6965,000</text>
<text stroke="#f0f0f0" stroke-width="0.36" x="1155.1" y="1005.4" font-size="18" fill="#f0f0f0">6834,000</text>
<text stroke="#f0f0f0" stroke-width="0.36" x="1239.3" y="1005.4" font-size="18" fill="#f0f0f0">6898,000</text>
<text stroke="#f0f0f0" stroke-width="0.36" x="1323.5" y="1005.4" font-size="18" fill="#f0f0f0">6893,000</text>
<text stroke="#f0f0f0" stroke-width="0.36" x="1407.7" y="1005.4" font-size="18" fill="#f0f0f0">6896,000</text>
<text stroke="#f0f0f0" stroke-width="0.36" x="1491.9" y="1005.4" font-size="18" fill="#f0f0f0">6825,000</text>
<text stroke="#f0f0f0" stroke-width="0.36" x="1576.1" y="1005.4" font-size="18" fill="#f0f0f0">6832,000</text>
<text stroke="#f0f0f0" stroke-width="0.36" x="1660.3" y="1005.4" font-size="18" fill="#f0f0f0">6786,000</text>
<text stroke="#f0f0f0" stroke-width="0.36" x="1744.5" y="1005.4" font-size="18" fill="#f0f0f0">6749,000</text>
<rect x="723" y="1013.8" width="1102.5" height="29.9" fill="#424242"/>
<rect x="723" y="1013.3" width="1102.5" height="1" fill="#353535"/>
<text stroke="#f2f2f2" stroke-width="0.18" x="737" y="1035.3" font-size="18" font-weight="bold" fill="#f2f2f2" textLength="71.3" lengthAdjust="spacingAndGlyphs">ΔE 2000</text>
<text stroke="#f0f0f0" stroke-width="0.36" x="902.5" y="1035.3" font-size="18" fill="#f0f0f0">0,099</text>
<text stroke="#f0f0f0" stroke-width="0.36" x="986.7" y="1035.3" font-size="18" fill="#f0f0f0">2,479</text>
<text stroke="#f0f0f0" stroke-width="0.36" x="1070.9" y="1035.3" font-size="18" fill="#f0f0f0">2,458</text>
<text stroke="#f0f0f0" stroke-width="0.36" x="1155.1" y="1035.3" font-size="18" fill="#f0f0f0">2,276</text>
<text stroke="#f0f0f0" stroke-width="0.36" x="1239.3" y="1035.3" font-size="18" fill="#f0f0f0">2,591</text>
<text stroke="#f0f0f0" stroke-width="0.36" x="1323.5" y="1035.3" font-size="18" fill="#f0f0f0">2,876</text>
<text stroke="#f0f0f0" stroke-width="0.36" x="1407.7" y="1035.3" font-size="18" fill="#f0f0f0">3,360</text>
<text stroke="#f0f0f0" stroke-width="0.36" x="1491.9" y="1035.3" font-size="18" fill="#f0f0f0">3,461</text>
<text stroke="#f0f0f0" stroke-width="0.36" x="1576.1" y="1035.3" font-size="18" fill="#f0f0f0">3,893</text>
<text stroke="#f0f0f0" stroke-width="0.36" x="1660.3" y="1035.3" font-size="18" fill="#f0f0f0">3,877</text>
<text stroke="#f0f0f0" stroke-width="0.36" x="1744.5" y="1035.3" font-size="18" fill="#f0f0f0">4,265</text>
<rect x="1" y="1113" width="1647" height="52" fill="url(#barbg)"/>
<rect x="1.6" y="1113" width="125.5" height="51" rx="3" fill="url(#btngray)"/>
<rect x="5.6" y="1117" width="117.5" height="30.5" rx="3" fill="#000000" stroke="#5a5a5a" stroke-width="1"/>
<text stroke="#333" stroke-width="0.20" x="64.3" y="1160" font-size="10" fill="#333" text-anchor="middle">0</text>
<rect x="129.0" y="1113" width="125.5" height="51" rx="3" fill="url(#btngray)"/>
<rect x="133.0" y="1117" width="117.5" height="30.5" rx="3" fill="#1a1a1a" stroke="#5a5a5a" stroke-width="1"/>
<text stroke="#333" stroke-width="0.20" x="191.7" y="1160" font-size="10" fill="#333" text-anchor="middle">10</text>
<rect x="256.3" y="1113" width="125.5" height="51" rx="3" fill="url(#btngray)"/>
<rect x="260.3" y="1117" width="117.5" height="30.5" rx="3" fill="#333333" stroke="#5a5a5a" stroke-width="1"/>
<text stroke="#333" stroke-width="0.20" x="319.0" y="1160" font-size="10" fill="#333" text-anchor="middle">20</text>
<rect x="383.7" y="1113" width="125.5" height="51" rx="3" fill="url(#btngray)"/>
<rect x="387.7" y="1117" width="117.5" height="30.5" rx="3" fill="#4d4d4d" stroke="#5a5a5a" stroke-width="1"/>
<text stroke="#333" stroke-width="0.20" x="446.4" y="1160" font-size="10" fill="#333" text-anchor="middle">30</text>
<rect x="511.0" y="1113" width="125.5" height="51" rx="3" fill="url(#btngray)"/>
<rect x="515.0" y="1117" width="117.5" height="30.5" rx="3" fill="#666666" stroke="#5a5a5a" stroke-width="1"/>
<text stroke="#333" stroke-width="0.20" x="573.7" y="1160" font-size="10" fill="#333" text-anchor="middle">40</text>
<rect x="638.4" y="1113" width="125.5" height="51" rx="3" fill="url(#btngray)"/>
<rect x="642.4" y="1117" width="117.5" height="30.5" rx="3" fill="#808080" stroke="#5a5a5a" stroke-width="1"/>
<text stroke="#333" stroke-width="0.20" x="701.1" y="1160" font-size="10" fill="#333" text-anchor="middle">50</text>
<rect x="765.8" y="1113" width="125.5" height="51" rx="3" fill="url(#btngray)"/>
<rect x="769.8" y="1117" width="117.5" height="30.5" rx="3" fill="#999999" stroke="#5a5a5a" stroke-width="1"/>
<text stroke="#333" stroke-width="0.20" x="828.5" y="1160" font-size="10" fill="#333" text-anchor="middle">60</text>
<rect x="893.1" y="1113" width="125.5" height="51" rx="3" fill="url(#btngray)"/>
<rect x="897.1" y="1117" width="117.5" height="30.5" rx="3" fill="#b3b3b3" stroke="#5a5a5a" stroke-width="1"/>
<text stroke="#333" stroke-width="0.20" x="955.8" y="1160" font-size="10" fill="#333" text-anchor="middle">70</text>
<rect x="1020.5" y="1113" width="125.5" height="51" rx="3" fill="url(#btngray)"/>
<rect x="1024.5" y="1117" width="117.5" height="30.5" rx="3" fill="#cccccc" stroke="#5a5a5a" stroke-width="1"/>
<text stroke="#333" stroke-width="0.20" x="1083.2" y="1160" font-size="10" fill="#333" text-anchor="middle">80</text>
<rect x="1147.8" y="1113" width="125.5" height="51" rx="3" fill="url(#btngray)"/>
<rect x="1151.8" y="1117" width="117.5" height="30.5" rx="3" fill="#e6e6e6" stroke="#5a5a5a" stroke-width="1"/>
<text stroke="#333" stroke-width="0.20" x="1210.5" y="1160" font-size="10" fill="#333" text-anchor="middle">90</text>
<rect x="1275.2" y="1113" width="125.5" height="51" rx="3" fill="url(#btnsel)"/>
<rect x="1279.2" y="1117" width="117.5" height="30.5" rx="3" fill="#fff"/>
<text stroke="#fff" stroke-width="0.10" x="1337.9" y="1160" font-size="10" font-weight="bold" fill="#fff" text-anchor="middle">100</text>
<rect x="1640" y="1113" width="8.5" height="52" fill="#2a2a2a"/>
<rect x="1648.8" y="1113" width="40" height="51" rx="3" fill="url(#btngray)"/>
<rect x="1649" y="1128" width="40" height="1" fill="#444"/>
<circle cx="1669.2" cy="1119.7" r="5" fill="#7a7a7a"/>
<path d="M1666 1121 L1672.5 1121 L1669.2 1117.5 Z" fill="#222"/>
<rect x="1657" y="1135" width="23" height="23" rx="2" fill="#aaa" stroke="#111" stroke-width="2"/>
<rect x="1663" y="1141" width="11" height="11" fill="#000"/>
<rect x="1690.3" y="1113" width="37.3" height="25" fill="url(#btngray)"/>
<rect x="1727.6" y="1113" width="0.8" height="25" fill="#333"/>
<circle cx="1708.9" cy="1126" r="8" fill="url(#circ)"/>
<rect x="1728.1" y="1113" width="37.3" height="25" fill="url(#btngray)"/>
<rect x="1765.4" y="1113" width="0.8" height="25" fill="#333"/>
<circle cx="1746.7" cy="1126" r="8" fill="url(#circ)"/>
<rect x="1765.9" y="1113" width="37.3" height="25" fill="url(#btngray)"/>
<rect x="1803.2" y="1113" width="0.8" height="25" fill="#333"/>
<circle cx="1784.5" cy="1126" r="8" fill="url(#circ)"/>
<rect x="1803.7" y="1113" width="37.3" height="25" fill="url(#btngray)"/>
<rect x="1841.0" y="1113" width="0.8" height="25" fill="#333"/>
<circle cx="1822.3" cy="1126" r="8" fill="url(#circ)"/>
<rect x="1841.5" y="1113" width="37.3" height="25" fill="url(#btngray)"/>
<rect x="1878.8" y="1113" width="0.8" height="25" fill="#333"/>
<circle cx="1860.1" cy="1126" r="8" fill="url(#circ)"/>
<rect x="1705.5" y="1123" width="6" height="6" fill="#222"/>
<path d="M1744.5 1121.5 L1751 1126.3 L1744.5 1131 Z" fill="#222"/>
<path d="M1781.5 1121 H1779.8 V1131 H1781.5 M1788.7 1121 H1790.4 V1131 H1788.7" fill="none" stroke="#222" stroke-width="1.6"/><rect x="1783.2" y="1125.5" width="1.5" height="1.5" fill="#222"/><rect x="1785.5" y="1125.5" width="1.5" height="1.5" fill="#222"/>
<path d="M1822.3 1126 C1820 1122 1816 1122 1816 1126 C1816 1130 1820 1130 1822.3 1126 C1824.6 1122 1828.6 1122 1828.6 1126 C1828.6 1130 1824.6 1130 1822.3 1126 Z" fill="none" stroke="#222" stroke-width="1.6"/>
<path d="M1856.2 1125.5 A4.2 4.2 0 0 1 1863.2 1122.8 M1864.4 1126.8 A4.2 4.2 0 0 1 1857.4 1129.4" fill="none" stroke="#222" stroke-width="1.9"/><path d="M1861.5 1120.5 L1865.5 1120.2 L1864.8 1124.5 Z M1859.2 1131.6 L1855.2 1131.8 L1855.9 1127.6 Z" fill="#222"/>
<rect x="1879.5" y="1113" width="38" height="25" fill="url(#barbg)"/>
<circle cx="1898.9" cy="1126" r="7.5" fill="#2e2e2e"/>
<rect x="1690.3" y="1139" width="113" height="25" rx="2" fill="url(#btngray)"/>
<rect x="1803.3" y="1139" width="114" height="25" rx="2" fill="url(#btngray)"/>
<rect x="1803" y="1139" width="1" height="25" fill="#444"/>
<circle cx="1715.8" cy="1151.8" r="8" fill="url(#circ)"/>
<circle cx="1893.8" cy="1151.8" r="8" fill="url(#circ)"/>
<text stroke="#222" stroke-width="0.13" x="1715.8" y="1156" font-size="13" font-weight="bold" fill="#222" text-anchor="middle">«</text>
<text stroke="#222" stroke-width="0.13" x="1893.8" y="1156" font-size="13" font-weight="bold" fill="#222" text-anchor="middle">»</text>
<text stroke="#222" stroke-width="0.38" x="1737.7" y="1158.3" font-size="19" fill="#222" textLength="42.5" lengthAdjust="spacingAndGlyphs">Back</text>
<text stroke="#222" stroke-width="0.38" x="1827.4" y="1158.3" font-size="19" fill="#222" textLength="43" lengthAdjust="spacingAndGlyphs">Next</text>
<rect x="0" y="0" width="1" height="1166" fill="#6a6a6a"/>
<rect x="1918" y="26" width="1" height="1140" fill="#1e1e1e"/>
<rect x="1919" y="26" width="1" height="1140" fill="#6a6a6a"/>
</svg></body></html>
